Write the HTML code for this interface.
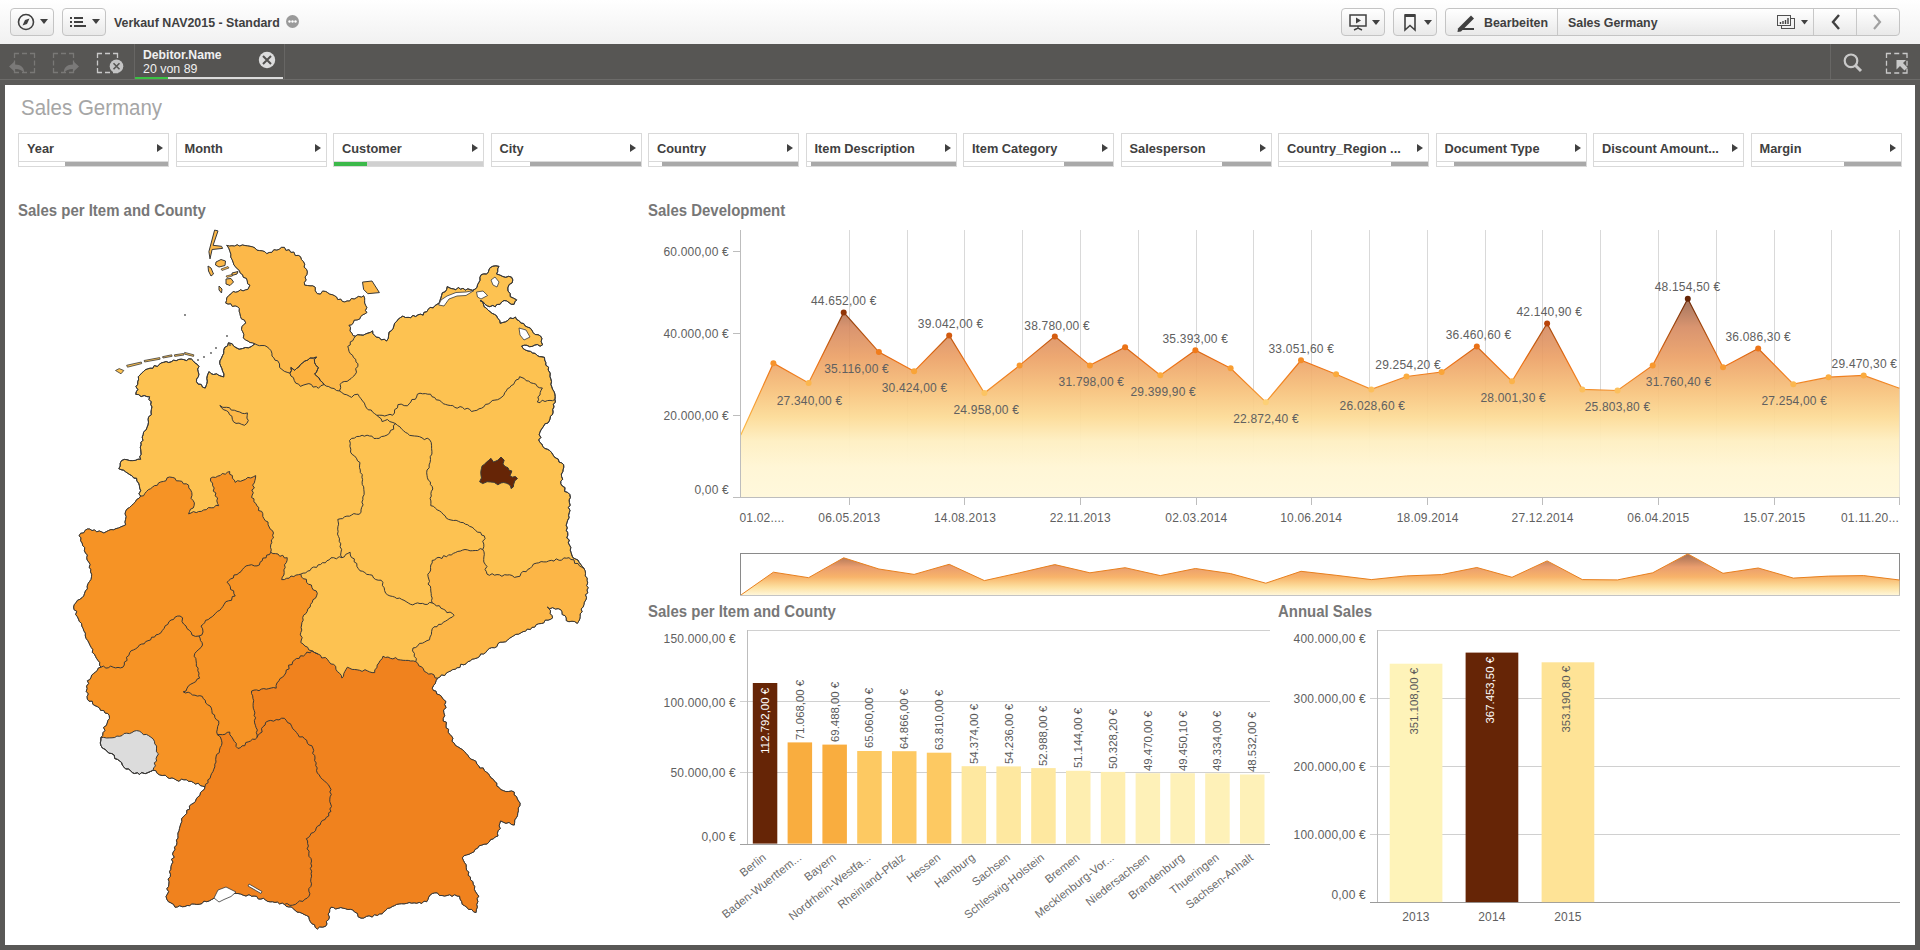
<!DOCTYPE html>
<html><head><meta charset="utf-8">
<style>
*{margin:0;padding:0;box-sizing:border-box}
html,body{width:1920px;height:950px;overflow:hidden;background:#595856;font-family:"Liberation Sans", sans-serif}
.abs{position:absolute}
.tb{position:absolute;left:0;top:0;width:1920px;height:44px;background:linear-gradient(#ffffff,#f1f1f1)}
.btn{position:absolute;top:8px;height:28px;border:1px solid #c4c4c4;border-radius:4px;background:linear-gradient(#ffffff,#e9e9e9)}
.selbar{position:absolute;left:0;top:44px;width:1920px;height:41px;background:#575654}
.content{position:absolute;left:5px;top:85px;width:1910px;height:860px;background:#fff}
.fbox{position:absolute;top:133px;width:151px;height:34px;border:1px solid #d9d9d9;background:#fff}
.fbox .lbl{position:absolute;left:8px;top:6.5px;font-weight:bold;font-size:12.8px;color:#404040;white-space:nowrap}
.fbox .arr{position:absolute;right:5px;top:10px;width:0;height:0;border-top:4.5px solid transparent;border-bottom:4.5px solid transparent;border-left:6px solid #404040}
.fbox .bar{position:absolute;left:0;right:0;top:27px;height:1px;background:#d9d9d9}
.fbox .prog{position:absolute;top:28px;height:4px;right:0;background:#a9a9a9}
.ptitle{position:absolute;font-weight:bold;font-size:16px;color:#777;white-space:nowrap;transform-origin:0 0;transform:scaleX(0.935)}
.t{position:absolute;white-space:nowrap;font-size:12px;letter-spacing:0.2px;color:#606060}
.r{font-size:11.4px;letter-spacing:0}
</style></head><body>

<div class="tb"></div>
<div class="btn" style="left:10px;width:44px"></div>
<div class="btn" style="left:62px;width:44px"></div>
<svg class="abs" style="left:0;top:0" width="300" height="44">
 <circle cx="26" cy="22" r="7.5" fill="none" stroke="#404040" stroke-width="1.6"/>
 <path d="M29.5,18.5 L27,24 L22.5,25.5 L25,20 Z" fill="#404040"/>
 <path d="M40,19 L48,19 L44,24 Z" fill="#404040"/>
 <rect x="70" y="17" width="2" height="2" fill="#404040"/><rect x="74" y="17" width="9" height="2" fill="#404040"/>
 <rect x="70" y="21" width="2" height="2" fill="#404040"/><rect x="74" y="21" width="9" height="2" fill="#404040"/>
 <rect x="70" y="25" width="2" height="2" fill="#404040"/><rect x="74" y="25" width="12" height="2" fill="#404040"/>
 <path d="M92,19 L100,19 L96,24 Z" fill="#404040"/>
 <circle cx="292.5" cy="21.5" r="6.5" fill="#9a9a9a"/>
 <circle cx="289.5" cy="21.5" r="1.2" fill="#fff"/><circle cx="292.5" cy="21.5" r="1.2" fill="#fff"/><circle cx="295.5" cy="21.5" r="1.2" fill="#fff"/>
</svg>
<div class="abs" style="left:114px;top:15.5px;font-size:12.4px;font-weight:bold;color:#404040;white-space:nowrap">Verkauf NAV2015 - Standard</div>

<div class="btn" style="left:1341px;width:44px"></div>
<div class="btn" style="left:1393px;width:44px"></div>
<div class="btn" style="left:1445px;width:455px"></div>
<div class="abs" style="left:1557px;top:9px;width:1px;height:26px;background:#c8c8c8"></div>
<div class="abs" style="left:1813px;top:9px;width:1px;height:26px;background:#c8c8c8"></div>
<div class="abs" style="left:1856px;top:9px;width:1px;height:26px;background:#c8c8c8"></div>
<svg class="abs" style="left:1330px;top:0" width="590" height="44">
 <rect x="20" y="15" width="16" height="11" fill="none" stroke="#404040" stroke-width="1.5"/>
 <path d="M26,17.5 L31,20.5 L26,23.5 Z" fill="#404040"/>
 <path d="M28,26 L28,28 M24,30 L28,28 L32,30" stroke="#404040" stroke-width="1.4" fill="none"/>
 <path d="M42,20 L50,20 L46,25 Z" fill="#404040"/>
 <path d="M75,15 L75,30 L80,25.5 L85,30 L85,15 Z" fill="none" stroke="#404040" stroke-width="1.6"/>
 <rect x="75" y="14" width="10" height="3" fill="#404040"/>
 <path d="M94,20 L102,20 L98,25 Z" fill="#404040"/>
 <path d="M128,28.5 L141,15.5 L144,18.5 L131,31.5 L127.5,32 Z" fill="#404040"/>
 <rect x="131" y="28" width="13" height="2" fill="#404040"/>
 <rect x="451.5" y="18.5" width="13" height="10" fill="none" stroke="#505050" stroke-width="1"/>
 <rect x="447.5" y="15.5" width="13" height="10" fill="#f4f4f4" stroke="#505050" stroke-width="1"/>
 <path d="M450.5,24 L450.5,22 M453,24 L453,21 M455.5,24 L455.5,20 M458,24 L458,18" stroke="#404040" stroke-width="1.4"/>
 <path d="M471,20 L478,20 L474.5,24.5 Z" fill="#404040"/>
 <path d="M509,15 L503,22 L509,29" fill="none" stroke="#404040" stroke-width="2.4"/>
 <path d="M544,15 L550,22 L544,29" fill="none" stroke="#a0a0a0" stroke-width="2.2"/>
</svg>
<div class="abs" style="left:1484px;top:15.5px;font-size:12.4px;font-weight:bold;color:#404040">Bearbeiten</div>
<div class="abs" style="left:1568px;top:15.5px;font-size:12.4px;font-weight:bold;color:#404040">Sales Germany</div>

<div class="selbar"></div>
<div class="abs" style="left:0;top:79px;width:1920px;height:6px;background:#5b5a58"></div><div class="abs" style="left:0;top:79px;width:1920px;height:1px;background:#6c6b69"></div>
<div class="abs" style="left:134px;top:44px;width:151px;height:35px;background:#555452;border-left:1px solid #676664;border-right:1px solid #676664"></div>
<div class="abs" style="left:135px;top:77px;width:148px;height:2px;background:#dcdcdc"></div>
<div class="abs" style="left:135px;top:77px;width:33px;height:2px;background:#3bc144"></div>
<div class="abs" style="left:143px;top:48px;font-size:12.2px;font-weight:bold;color:#f0f0f0">Debitor.Name</div>
<div class="abs" style="left:143px;top:62px;font-size:12.4px;color:#f0f0f0">20 von 89</div>
<div class="abs" style="left:1830px;top:44px;width:1px;height:35px;background:#686765"></div>
<svg class="abs" style="left:0;top:44px" width="1920" height="41">
 <circle cx="267" cy="16" r="8.2" fill="#dcdcdc"/>
 <path d="M263,12 L271,20 M271,12 L263,20" stroke="#52514f" stroke-width="2"/>
 <path d="M14.5,14.0 V9.5 H19.0 M22.0,9.5 H27.0 M30.0,9.5 H34.5 V14.0 M14.5,16.5 V21.5 M34.5,16.5 V21.5 M14.5,24.0 V28.5 H19.0 M22.0,28.5 H27.0 M30.0,28.5 H34.5 V24.0" fill="none" stroke="#797876" stroke-width="1.3"/>
 <path d="M53.5,14.0 V9.5 H58.0 M61.0,9.5 H66.0 M69.0,9.5 H73.5 V14.0 M53.5,16.5 V21.5 M73.5,16.5 V21.5 M53.5,24.0 V28.5 H58.0 M61.0,28.5 H66.0 M69.0,28.5 H73.5 V24.0" fill="none" stroke="#797876" stroke-width="1.3"/>
 <path d="M97.5,14.0 V9.5 H102.0 M105.0,9.5 H110.0 M113.0,9.5 H117.5 V14.0 M97.5,16.5 V21.5 M117.5,16.5 V21.5 M97.5,24.0 V28.5 H102.0 M105.0,28.5 H110.0 M113.0,28.5 H117.5 V24.0" fill="none" stroke="#c9c9c9" stroke-width="1.3"/>
 <path d="M9,22.5 L15,17 L15,20.5 C21,20.5 24.5,23.5 24,29 C22,26 19.5,25 15,25 L15,28 Z" fill="#7a7978"/>
 <path d="M79,22.5 L73,17 L73,20.5 C67,20.5 63.5,23.5 64,29 C66,26 68.5,25 73,25 L73,28 Z" fill="#7a7978"/>
 <circle cx="116.5" cy="22.3" r="6.8" fill="#c4c4c4"/>
 <path d="M113.5,19.3 L119.5,25.3 M119.5,19.3 L113.5,25.3" stroke="#575654" stroke-width="1.6"/>
 <circle cx="1851" cy="16.8" r="6.3" fill="none" stroke="#c9c9c9" stroke-width="2.2"/>
 <path d="M1855.5,21.5 L1861,27" stroke="#c9c9c9" stroke-width="3"/>
 <path d="M1886.5,14.0 V9.5 H1891.0 M1894.25,9.5 H1899.25 M1902.5,9.5 H1907.0 V14.0 M1886.5,16.75 V21.75 M1907.0,16.75 V21.75 M1886.5,24.5 V29.0 H1891.0 M1894.25,29.0 H1899.25 M1902.5,29.0 H1907.0 V24.5" fill="none" stroke="#c9c9c9" stroke-width="1.3"/>
 <path d="M1896.5,16 L1906,16 L1903,19 L1907.5,23.5 L1904.5,26.5 L1900,22 L1896.5,25.5 Z" fill="#c9c9c9"/>
</svg>

<div class="content"></div>
<div class="abs" style="left:20.5px;top:94.5px;font-size:22.5px;color:#a6a6a6;white-space:nowrap;transform-origin:0 0;transform:scaleX(0.91)">Sales Germany</div>
<div class="fbox" style="left:18.0px"><div class="lbl">Year</div><div class="arr"></div><div class="bar"></div><div class="prog" style="left:46px"></div></div>
<div class="fbox" style="left:175.5px"><div class="lbl">Month</div><div class="arr"></div><div class="bar"></div></div>
<div class="fbox" style="left:333.0px"><div class="lbl">Customer</div><div class="arr"></div><div class="bar"></div><div class="prog" style="left:0;background:#d0d0d0"></div><div class="prog" style="left:0;width:33px;right:auto;background:#3cb94a"></div></div>
<div class="fbox" style="left:490.5px"><div class="lbl">City</div><div class="arr"></div><div class="bar"></div><div class="prog" style="left:38.5px"></div></div>
<div class="fbox" style="left:648.0px"><div class="lbl">Country</div><div class="arr"></div><div class="bar"></div><div class="prog" style="left:13px"></div></div>
<div class="fbox" style="left:805.5px"><div class="lbl">Item Description</div><div class="arr"></div><div class="bar"></div><div class="prog" style="left:4.5px"></div></div>
<div class="fbox" style="left:963.0px"><div class="lbl">Item Category</div><div class="arr"></div><div class="bar"></div><div class="prog" style="left:100px"></div></div>
<div class="fbox" style="left:1120.5px"><div class="lbl">Salesperson</div><div class="arr"></div><div class="bar"></div><div class="prog" style="left:100.5px"></div></div>
<div class="fbox" style="left:1278.0px"><div class="lbl">Country_Region ...</div><div class="arr"></div><div class="bar"></div><div class="prog" style="left:111.5px"></div></div>
<div class="fbox" style="left:1435.5px"><div class="lbl">Document Type</div><div class="arr"></div><div class="bar"></div><div class="prog" style="left:17px"></div></div>
<div class="fbox" style="left:1593.0px"><div class="lbl">Discount Amount...</div><div class="arr"></div><div class="bar"></div></div>
<div class="fbox" style="left:1750.5px"><div class="lbl">Margin</div><div class="arr"></div><div class="bar"></div><div class="prog" style="left:92.5px"></div></div>
<div class="ptitle" style="left:18px;top:201.5px">Sales per Item and County</div>
<div class="ptitle" style="left:648px;top:201.5px">Sales Development</div>
<div class="ptitle" style="left:648px;top:603px">Sales per Item and County</div>
<div class="ptitle" style="left:1278px;top:603px">Annual Sales</div>
<svg style="position:absolute;left:0;top:0" width="1920" height="950" viewBox="0 0 1920 950">
<path d="M226.8,245.3 L229.3,246.1 L231.9,245.8 L234.5,246.1 L237.2,244.8 L239.7,246.1 L242.3,245.0 L244.9,245.5 L247.4,245.9 L250.0,246.3 L252.6,246.9 L255.0,248.0 L256.9,250.2 L259.6,250.6 L262.3,250.9 L264.8,251.7 L266.8,253.7 L269.2,252.5 L272.0,252.3 L273.8,249.8 L276.9,250.2 L279.4,249.2 L281.5,247.4 L284.4,247.4 L285.9,250.4 L289.2,249.8 L290.8,252.4 L293.9,252.2 L295.2,255.6 L298.3,255.4 L300.5,256.8 L301.4,259.5 L303.4,261.7 L304.7,264.2 L304.0,267.1 L306.5,269.3 L307.3,271.9 L306.8,274.7 L305.0,277.1 L306.1,280.0 L304.3,282.4 L304.7,285.2 L307.4,285.5 L310.0,285.9 L312.8,285.9 L315.2,287.3 L315.2,290.8 L317.3,293.7 L320.4,294.2 L322.6,291.1 L325.7,291.5 L327.8,292.8 L329.7,294.2 L332.2,294.7 L334.4,295.7 L336.5,297.0 L337.7,299.6 L340.8,299.2 L342.3,301.4 L344.7,302.0 L347.0,301.0 L349.6,301.1 L351.4,298.5 L354.2,299.1 L356.4,297.8 L358.6,296.4 L361.4,297.2 L363.6,295.8 L364.6,298.1 L364.6,300.6 L364.6,303.1 L365.6,305.4 L366.8,307.6 L365.4,310.4 L366.8,312.6 L364.7,313.9 L362.4,314.9 L360.7,316.7 L359.5,319.1 L357.1,319.9 L354.2,320.1 L353.2,322.9 L351.6,324.8 L348.9,325.2 L350.5,327.6 L349.9,330.9 L351.8,333.2 L353.1,335.7 L355.4,336.2 L357.6,334.7 L360.4,334.9 L363.2,335.2 L365.5,334.0 L367.9,333.1 L370.4,332.4 L372.6,330.9 L372.9,333.6 L374.6,335.4 L376.4,337.2 L379.2,337.5 L381.2,339.8 L384.3,339.3 L386.5,341.0 L388.3,338.3 L388.6,335.2 L389.1,332.1 L391.5,330.6 L393.1,328.5 L393.9,325.8 L394.7,323.1 L396.7,321.4 L398.2,319.2 L400.4,317.6 L402.8,316.1 L405.5,317.5 L408.1,317.4 L410.7,317.6 L413.0,315.4 L415.7,316.5 L418.0,314.8 L420.5,314.2 L423.2,315.1 L423.9,312.4 L426.9,311.6 L428.2,309.4 L430.0,307.4 L433.2,307.8 L434.9,305.7 L437.1,304.3 L439.3,302.8 L440.0,300.3 L440.9,298.0 L441.6,295.4 L442.3,292.8 L445.4,291.6 L446.7,289.3 L447.2,286.6 L451.0,288.5 L453.4,288.8 L455.8,289.8 L458.2,287.4 L460.6,289.2 L463.0,288.3 L465.4,290.1 L467.8,288.8 L470.2,289.6 L472.6,290.3 L475.0,289.2 L477.0,287.4 L477.5,284.8 L478.8,282.5 L480.0,280.3 L479.9,277.3 L481.3,274.6 L483.8,273.9 L486.3,274.0 L488.3,272.4 L488.9,269.9 L490.1,267.7 L492.9,266.2 L495.9,265.8 L499.0,266.4 L497.7,268.8 L497.7,271.6 L496.5,274.0 L499.8,275.0 L502.8,276.5 L505.7,277.3 L508.7,276.3 L511.6,277.2 L512.8,279.9 L512.2,282.8 L509.1,284.6 L507.8,287.9 L508.0,291.0 L510.2,293.6 L510.3,296.7 L513.6,298.2 L516.7,299.9 L514.9,301.8 L514.1,304.3 L511.2,304.3 L509.0,302.6 L506.7,300.9 L504.0,300.5 L501.7,302.0 L500.1,304.3 L496.8,304.5 L495.2,306.9 L492.9,305.4 L489.8,306.7 L487.3,305.9 L485.0,304.3 L483.0,301.7 L480.0,300.5 L482.5,301.6 L483.4,304.1 L484.1,306.7 L486.3,308.1 L488.0,310.1 L490.0,311.6 L492.0,313.3 L494.3,314.3 L496.5,315.7 L497.7,318.3 L499.8,320.4 L500.2,323.3 L502.8,322.5 L505.5,321.8 L507.9,320.4 L509.9,317.9 L513.1,318.6 L515.4,317.0 L516.7,319.5 L519.2,320.8 L520.8,323.0 L523.7,323.5 L525.1,325.9 L527.5,327.1 L530.2,328.0 L531.8,330.1 L533.2,332.6 L535.0,334.5 L538.1,334.7 L540.5,336.0 L541.9,338.4 L541.2,341.7 L542.6,344.8 L540.1,346.2 L537.3,344.5 L534.8,345.1 L532.2,346.4 L529.6,346.7 L526.9,345.3 L524.3,345.2 L521.7,346.0 L523.1,348.5 L525.4,350.0 L528.0,351.0 L530.5,351.4 L532.6,353.0 L535.2,353.4 L537.1,355.4 L539.4,356.6 L542.0,356.8 L544.5,357.4 L544.7,360.1 L545.8,362.5 L545.8,365.2 L548.6,367.2 L548.2,370.0 L550.2,373.1 L550.0,376.7 L550.9,379.1 L551.5,381.7 L550.9,384.4 L551.8,386.9 L552.6,389.3 L554.1,391.7 L554.9,394.1 L555.2,396.7 L555.0,399.4 L555.4,402.1 L553.4,404.3 L554.0,407.0 L552.7,409.4 L553.1,412.1 L552.5,414.6 L550.5,416.1 L550.1,418.8 L549.2,421.1 L547.8,423.1 L544.8,423.9 L543.7,426.1 L542.3,428.1 L540.9,430.1 L539.9,432.3 L539.2,434.8 L540.9,437.4 L538.7,439.9 L539.9,442.4 L541.8,444.0 L542.9,446.5 L544.6,448.4 L547.3,449.2 L549.5,450.4 L551.3,452.2 L552.7,454.3 L554.0,456.6 L556.0,458.1 L558.3,459.2 L559.1,462.1 L561.7,462.9 L563.6,464.6 L563.8,467.1 L563.2,469.4 L562.8,471.8 L561.4,474.1 L561.6,476.6 L562.7,479.2 L560.8,481.3 L560.8,483.8 L562.4,486.1 L565.0,487.6 L564.6,491.4 L567.8,492.5 L569.8,494.5 L570.4,497.5 L569.2,499.9 L569.4,502.5 L570.2,505.2 L568.4,507.5 L570.0,510.3 L569.3,512.7 L568.6,515.2 L569.1,517.8 L567.7,520.2 L567.0,522.7 L566.2,525.2 L567.3,527.9 L566.3,530.3 L567.7,532.6 L567.8,535.2 L566.8,538.0 L569.4,540.0 L568.3,542.8 L569.5,545.1 L570.8,547.4 L570.3,550.2 L571.1,552.6 L571.8,555.0 L572.8,557.6 L575.3,558.9 L577.9,560.0 L579.2,562.4 L580.8,564.5 L582.4,566.6 L584.1,568.6 L585.1,570.9 L585.5,573.3 L585.2,575.9 L587.1,578.0 L587.0,580.5 L587.7,582.9 L586.6,585.6 L588.2,587.8 L586.9,590.0 L587.8,592.9 L585.4,594.7 L586.5,597.7 L585.8,600.0 L584.3,602.2 L583.9,604.7 L583.1,607.0 L581.1,609.0 L582.1,611.9 L580.1,613.9 L580.1,616.5 L579.8,619.0 L578.7,621.2 L577.3,623.4 L574.8,621.6 L572.0,621.2 L568.9,621.7 L566.3,620.6 L566.3,617.9 L565.1,615.7 L562.2,614.5 L562.1,611.8 L560.8,609.7 L558.2,608.6 L555.3,609.0 L552.7,607.6 L549.7,608.7 L547.2,607.0 L549.1,608.8 L550.5,610.8 L550.1,613.7 L551.9,615.5 L552.6,617.9 L550.5,619.3 L548.1,620.1 L545.3,620.0 L543.8,622.8 L541.4,623.5 L538.7,623.7 L536.3,624.6 L534.7,627.1 L532.0,627.3 L530.3,629.5 L527.3,629.0 L525.5,631.2 L523.0,631.6 L520.8,632.9 L518.6,634.1 L515.9,634.3 L513.7,635.7 L511.6,637.0 L509.4,638.3 L507.6,640.1 L505.6,641.7 L502.9,642.1 L500.1,642.2 L498.0,643.5 L496.8,646.6 L494.5,647.7 L491.6,647.6 L489.2,648.5 L487.3,650.3 L485.7,652.5 L483.6,653.9 L480.7,653.9 L479.4,656.6 L477.2,657.9 L474.7,658.7 L472.1,659.2 L470.2,660.9 L467.8,661.7 L466.1,663.7 L463.9,664.8 L460.8,664.2 L459.8,667.5 L457.1,667.7 L455.2,669.2 L452.6,669.6 L450.5,671.0 L448.3,671.9 L446.2,673.2 L444.7,675.5 L441.5,674.8 L439.9,677.0 L437.7,678.1 L436.1,680.5 L435.3,683.3 L433.5,685.6 L432.2,688.2 L433.4,690.5 L436.0,691.2 L436.7,694.0 L439.3,694.8 L441.3,696.2 L442.5,698.5 L444.4,700.0 L445.9,701.9 L444.6,704.5 L446.1,707.6 L443.5,709.9 L443.8,712.8 L444.7,715.7 L443.2,718.3 L443.1,721.0 L446.4,722.3 L446.0,725.1 L446.0,727.8 L448.6,729.3 L448.1,732.2 L449.6,734.2 L451.5,736.1 L452.9,738.2 L451.9,741.3 L454.1,743.0 L455.4,745.5 L457.8,746.8 L460.0,748.2 L462.3,749.6 L464.3,751.3 L466.0,753.4 L467.8,755.3 L469.2,757.5 L471.0,759.2 L473.6,760.1 L475.9,761.3 L476.8,764.0 L478.6,765.7 L479.8,768.1 L483.3,768.0 L484.3,770.6 L486.3,772.1 L488.3,773.6 L489.7,775.8 L491.0,777.9 L493.3,779.3 L494.6,781.5 L496.7,783.0 L496.8,786.1 L499.1,787.5 L500.6,789.5 L503.2,790.6 L505.9,791.6 L508.7,791.5 L511.7,791.0 L514.3,792.2 L514.1,794.9 L516.5,796.6 L517.3,798.9 L518.5,801.1 L520.1,803.1 L519.8,805.9 L518.2,808.0 L518.4,810.7 L517.7,813.1 L517.5,815.6 L516.3,817.8 L514.7,819.9 L514.6,822.5 L514.3,825.0 L511.5,824.5 L509.1,822.4 L505.9,823.3 L503.2,822.1 L500.6,820.9 L499.8,823.3 L499.1,825.8 L500.2,828.6 L498.0,830.8 L497.4,833.3 L497.9,836.0 L495.3,836.9 L493.4,838.8 L490.7,839.5 L489.1,842.0 L487.1,843.9 L484.2,844.2 L481.7,845.1 L479.1,845.8 L477.5,848.2 L475.2,849.3 L473.8,851.9 L471.4,853.0 L469.1,854.2 L466.5,854.9 L464.0,855.7 L462.3,857.9 L463.3,860.3 L464.5,862.6 L466.1,864.8 L466.2,867.5 L466.5,870.2 L468.8,872.1 L468.0,875.2 L470.4,877.0 L470.5,879.8 L472.8,881.6 L473.2,884.3 L474.7,886.5 L474.4,889.6 L475.6,891.9 L477.1,894.1 L478.7,896.2 L477.0,898.7 L477.9,901.7 L476.7,904.3 L477.3,907.2 L476.3,909.8 L476.0,912.6 L473.5,911.7 L471.7,909.4 L468.6,909.4 L466.8,907.2 L464.6,905.7 L462.3,904.4 L461.7,901.6 L460.1,899.1 L459.6,896.2 L457.1,896.0 L454.7,894.7 L452.0,896.3 L449.7,894.7 L447.1,895.5 L444.5,896.0 L442.1,895.5 L439.5,895.5 L437.3,892.8 L434.8,892.8 L432.2,893.5 L430.1,895.0 L428.7,897.1 L427.9,899.5 L426.7,901.7 L424.1,901.1 L421.8,903.4 L419.2,902.4 L416.7,903.2 L414.2,902.8 L411.7,903.1 L409.1,902.5 L406.6,903.4 L404.1,903.8 L401.6,903.7 L399.1,903.9 L396.6,904.4 L394.5,905.6 L392.2,906.5 L390.1,907.9 L387.5,908.3 L385.9,910.3 L383.8,911.7 L382.2,913.8 L379.5,913.9 L377.5,915.4 L374.6,914.7 L372.1,917.0 L369.1,915.7 L366.4,916.4 L363.8,918.0 L361.0,918.1 L358.2,916.8 L357.5,913.4 L354.7,912.1 L352.8,909.9 L350.4,909.3 L347.9,909.5 L345.6,908.7 L343.2,908.2 L340.8,907.5 L338.2,908.3 L335.7,908.9 L333.4,907.5 L331.0,907.2 L329.7,909.4 L329.6,912.0 L328.1,914.1 L329.3,917.0 L328.7,919.5 L326.3,921.4 L326.9,924.1 L325.5,926.3 L322.7,927.1 L319.6,926.9 L317.3,929.0 L315.3,927.4 L314.6,924.8 L311.9,923.7 L310.4,921.7 L309.3,919.4 L308.8,916.6 L306.3,915.4 L304.1,914.4 L301.9,913.2 L299.6,912.3 L297.0,912.0 L295.1,910.3 L293.2,908.7 L291.4,906.9 L288.6,906.9 L286.2,906.3 L284.4,904.4 L282.3,903.0 L279.6,903.9 L277.5,902.0 L274.9,902.4 L272.6,901.7 L270.1,901.8 L267.7,901.4 L265.6,900.0 L263.5,898.3 L260.9,899.0 L258.4,899.0 L256.6,896.3 L254.1,896.0 L251.6,896.2 L249.0,894.6 L246.0,896.0 L243.3,895.2 L240.7,894.0 L238.0,893.5 L235.2,893.5 L232.4,893.6 L229.5,893.4 L226.9,894.7 L224.1,894.9 L221.3,894.7 L218.7,896.2 L215.8,895.9 L213.9,898.3 L211.6,899.5 L209.3,900.8 L206.9,901.7 L203.9,901.1 L202.0,903.5 L199.5,904.2 L196.8,904.4 L194.3,904.0 L191.8,903.9 L189.6,905.6 L187.1,905.5 L184.8,906.5 L182.3,906.7 L179.7,905.7 L177.4,906.9 L175.0,907.2 L173.6,904.4 L171.0,902.9 L168.2,901.5 L166.7,898.9 L166.1,896.3 L167.5,894.0 L168.7,891.6 L166.8,888.9 L168.5,886.5 L168.9,884.1 L169.1,881.6 L168.1,879.0 L170.3,876.7 L170.5,874.2 L169.5,871.6 L170.9,869.4 L171.0,866.8 L171.6,864.4 L173.0,862.1 L171.5,859.2 L174.4,857.3 L172.6,854.3 L173.3,851.9 L175.0,849.7 L174.6,847.1 L176.6,845.1 L177.0,842.7 L176.5,840.1 L178.1,838.0 L178.0,835.5 L178.0,833.0 L179.1,830.8 L179.5,828.4 L180.2,826.0 L180.9,823.7 L181.9,821.5 L181.6,818.9 L183.2,816.8 L185.1,815.1 L186.8,813.3 L186.8,810.3 L189.6,809.2 L189.4,806.0 L191.4,804.4 L193.8,803.1 L195.5,801.3 L196.4,798.8 L197.9,796.9 L200.0,795.4 L200.5,792.6 L202.3,790.9 L204.4,789.3 L205.0,786.7 L202.6,786.1 L200.2,785.5 L198.3,783.2 L195.5,784.0 L193.4,782.5 L191.2,781.3 L188.6,781.3 L186.4,779.7 L183.9,779.8 L181.6,779.1 L178.9,781.2 L176.6,780.2 L174.3,778.8 L172.0,777.8 L169.5,778.5 L167.2,777.2 L165.2,775.2 L162.2,775.5 L159.6,774.8 L157.3,773.4 L155.8,770.6 L153.0,770.3 L150.4,771.5 L147.8,772.6 L145.1,773.7 L141.8,772.5 L139.4,774.4 L137.4,772.7 L134.4,773.5 L132.2,772.5 L130.4,770.4 L128.4,768.9 L125.7,768.9 L123.9,767.1 L122.4,765.1 L121.6,762.5 L119.6,760.9 L117.5,759.4 L114.8,758.5 L114.2,755.0 L111.9,753.6 L108.8,753.1 L107.0,751.1 L105.0,749.3 L102.5,748.1 L101.0,745.7 L100.3,743.0 L100.9,740.2 L101.0,737.5 L102.8,735.4 L103.0,732.7 L105.0,730.6 L103.6,727.4 L106.3,725.6 L107.2,723.2 L107.9,720.6 L109.5,718.4 L109.3,715.6 L107.8,713.5 L105.1,713.0 L103.8,710.5 L100.7,710.4 L99.5,708.0 L97.4,706.6 L95.0,705.6 L92.9,704.3 L92.2,701.1 L89.0,701.2 L87.4,699.2 L87.1,696.6 L88.4,693.9 L86.2,691.3 L87.2,688.7 L86.6,686.1 L88.7,683.4 L87.4,680.8 L89.7,679.7 L91.0,677.6 L91.8,675.0 L93.7,673.5 L95.6,672.0 L97.4,670.4 L98.4,668.0 L101.0,667.2 L99.6,665.2 L99.7,662.4 L98.1,660.5 L96.6,658.5 L95.5,656.3 L94.4,654.1 L92.3,652.4 L92.8,649.4 L91.3,647.5 L90.1,645.3 L89.0,642.9 L87.8,640.6 L86.2,638.5 L85.3,636.0 L85.4,633.1 L83.9,630.9 L83.1,628.4 L81.9,626.1 L81.6,623.4 L79.4,621.5 L78.5,619.1 L77.4,616.7 L75.7,614.6 L76.8,611.3 L74.1,609.7 L73.7,607.0 L74.4,604.3 L76.2,602.6 L77.4,600.4 L80.0,599.3 L82.1,597.7 L83.8,595.9 L84.6,593.3 L85.5,590.9 L87.4,588.9 L87.2,586.1 L88.1,583.7 L89.5,581.5 L91.1,579.4 L91.5,576.8 L91.7,574.3 L90.6,571.9 L90.8,569.4 L89.2,567.2 L90.2,564.5 L88.9,562.2 L87.2,560.1 L86.8,557.6 L87.4,555.0 L85.5,553.0 L84.4,550.6 L84.8,547.6 L82.7,545.6 L82.2,543.0 L80.7,540.8 L81.0,537.9 L79.2,535.8 L80.6,533.3 L83.7,532.9 L85.1,530.4 L87.4,529.0 L89.9,529.1 L92.0,530.6 L94.6,529.9 L96.6,531.9 L99.3,531.0 L101.6,531.9 L103.8,533.0 L106.1,531.8 L108.4,530.6 L110.9,529.6 L113.7,529.8 L116.0,528.6 L118.6,528.0 L120.9,526.9 L123.4,525.9 L125.7,524.8 L125.0,522.1 L125.6,519.4 L126.2,516.6 L125.1,513.9 L125.7,511.2 L127.2,508.9 L129.5,507.5 L131.4,505.7 L133.4,503.9 L135.3,502.0 L136.7,499.6 L139.1,498.2 L140.7,496.1 L138.9,493.8 L140.7,490.7 L139.7,488.3 L139.4,485.7 L138.6,483.2 L136.8,480.9 L136.6,478.3 L133.8,478.1 L132.1,475.9 L129.9,474.7 L127.8,473.3 L125.7,471.9 L123.7,470.3 L121.1,469.7 L118.8,468.7 L120.2,466.1 L120.2,463.1 L121.6,460.5 L124.3,459.4 L127.0,459.7 L129.8,460.6 L132.6,460.6 L135.3,460.4 L138.0,459.2 L140.7,459.2 L139.7,456.8 L141.1,454.4 L140.9,452.0 L140.7,449.6 L140.3,447.2 L141.1,444.8 L140.9,442.4 L142.9,440.3 L142.2,437.1 L143.2,434.6 L143.6,431.9 L146.1,429.9 L147.0,427.4 L148.0,424.9 L148.5,422.2 L148.1,419.4 L148.6,416.8 L151.3,414.8 L151.0,412.0 L151.4,409.4 L151.9,406.9 L150.7,404.4 L151.2,401.8 L148.9,399.5 L149.7,396.9 L146.9,396.6 L144.2,395.5 L141.1,396.6 L138.6,394.6 L135.8,394.4 L136.2,391.9 L137.8,389.5 L135.9,386.7 L137.7,384.3 L137.7,381.8 L138.6,379.3 L138.3,376.7 L140.0,375.0 L141.6,373.2 L143.4,371.6 L145.3,369.8 L147.6,368.9 L150.1,368.2 L152.8,368.3 L154.3,365.5 L157.4,366.5 L159.2,364.4 L161.3,362.9 L163.7,362.3 L166.1,361.5 L168.7,362.5 L171.2,361.8 L173.6,360.2 L176.2,360.7 L178.7,359.5 L181.2,359.2 L183.8,359.6 L186.4,360.6 L188.8,358.8 L191.4,359.0 L193.3,360.9 L195.0,363.0 L197.4,364.4 L199.0,366.6 L197.6,369.0 L198.2,371.6 L198.9,374.3 L198.3,376.8 L196.6,379.1 L196.5,381.7 L198.1,384.1 L201.2,384.4 L202.6,387.2 L205.3,388.0 L206.1,385.7 L206.9,383.4 L207.3,381.1 L206.8,378.5 L207.2,376.1 L208.0,373.8 L209.1,371.6 L211.1,373.6 L213.5,374.5 L216.6,373.8 L218.8,375.3 L221.2,376.2 L223.7,376.9 L223.9,373.9 L222.6,371.2 L221.8,368.4 L220.7,366.0 L219.7,363.5 L219.9,360.8 L221.3,358.4 L222.4,355.8 L223.7,353.3 L223.7,350.4 L224.6,347.5 L227.6,345.8 L228.4,342.8 L232.2,343.8 L233.7,346.1 L236.0,347.6 L239.1,349.2 L242.6,348.5 L245.4,347.5 L248.5,347.8 L251.2,346.6 L254.9,343.8 L252.6,342.8 L250.1,342.5 L248.0,341.0 L245.5,340.0 L243.4,337.8 L243.9,334.5 L242.8,331.9 L241.5,329.4 L242.0,326.7 L243.6,324.7 L245.8,323.1 L244.5,320.1 L241.5,318.9 L240.5,316.4 L240.0,313.7 L239.2,311.2 L239.4,308.4 L237.5,306.7 L235.2,305.8 L232.3,306.4 L230.8,303.7 L228.0,304.0 L225.8,303.1 L226.5,300.5 L226.8,297.9 L228.7,295.6 L231.1,293.8 L233.1,291.5 L235.7,292.3 L238.1,291.6 L240.4,289.8 L243.1,290.9 L245.5,289.9 L247.9,289.4 L250.0,285.2 L247.6,283.7 L247.3,280.9 L246.4,278.3 L243.4,277.3 L242.6,274.7 L240.3,273.1 L239.4,270.5 L237.3,268.8 L235.5,266.8 L233.9,264.8 L233.1,262.1 L232.1,259.6 L230.8,257.1 L230.9,254.2 L230.0,251.6 L228.8,248.2 Z" fill="#fdc251" stroke="#383838" stroke-width="1" stroke-linejoin="round"/>
<path d="M226.8,245.3 L229.3,246.1 L231.9,245.8 L234.5,246.1 L237.2,244.8 L239.7,246.1 L242.3,245.0 L244.9,245.5 L247.4,245.9 L250.0,246.3 L252.6,246.9 L255.0,248.0 L256.9,250.2 L259.6,250.6 L262.3,250.9 L264.8,251.7 L266.8,253.7 L269.2,252.5 L272.0,252.3 L273.8,249.8 L276.9,250.2 L279.4,249.2 L281.5,247.4 L284.4,247.4 L285.9,250.4 L289.2,249.8 L290.8,252.4 L293.9,252.2 L295.2,255.6 L298.3,255.4 L300.5,256.8 L301.4,259.5 L303.4,261.7 L304.7,264.2 L304.0,267.1 L306.5,269.3 L307.3,271.9 L306.8,274.7 L305.0,277.1 L306.1,280.0 L304.3,282.4 L304.7,285.2 L307.4,285.5 L310.0,285.9 L312.8,285.9 L315.2,287.3 L315.2,290.8 L317.3,293.7 L320.4,294.2 L322.6,291.1 L325.7,291.5 L327.8,292.8 L329.7,294.2 L332.2,294.7 L334.4,295.7 L336.5,297.0 L337.7,299.6 L340.8,299.2 L342.3,301.4 L344.7,302.0 L347.0,301.0 L349.6,301.1 L351.4,298.5 L354.2,299.1 L356.4,297.8 L358.6,296.4 L361.4,297.2 L363.6,295.8 L364.6,298.1 L364.6,300.6 L364.6,303.1 L365.6,305.4 L366.8,307.6 L365.4,310.4 L366.8,312.6 L364.7,313.9 L362.4,314.9 L360.7,316.7 L359.5,319.1 L357.1,319.9 L354.2,320.1 L353.2,322.9 L351.6,324.8 L348.9,325.2 L350.5,327.6 L349.9,330.9 L351.8,333.2 L353.1,335.7 L355.4,336.2 L353.9,338.3 L352.9,340.6 L350.3,341.9 L350.2,345.0 L347.8,346.3 L348.5,348.8 L349.0,351.3 L350.2,353.5 L352.5,355.2 L353.5,357.5 L355.7,359.3 L356.0,361.9 L357.9,363.8 L357.9,366.6 L355.6,368.6 L356.5,372.2 L355.1,374.7 L352.9,376.7 L351.1,378.5 L349.1,379.9 L347.1,381.4 L344.2,381.5 L341.9,382.4 L340.2,384.3 L340.7,387.7 L339.5,391.0 L336.5,390.5 L334.0,388.5 L331.0,388.0 L328.8,386.6 L326.2,386.1 L324.1,384.5 L322.4,382.3 L320.2,380.4 L318.9,377.8 L316.7,376.0 L314.6,374.1 L316.4,372.2 L317.4,369.8 L318.4,367.5 L316.0,365.5 L314.6,362.7 L314.4,359.5 L316.5,357.0 L313.3,358.1 L309.9,358.0 L307.8,360.1 L304.9,361.0 L302.7,362.8 L300.4,364.6 L298.9,366.9 L296.6,368.4 L294.7,370.3 L290.9,367.5 L291.4,370.5 L290.0,373.2 L287.1,372.3 L284.3,371.3 L281.9,369.4 L279.6,367.5 L279.5,363.9 L277.7,360.8 L275.0,360.2 L273.8,357.8 L272.0,356.1 L271.9,353.2 L271.0,350.7 L269.1,348.5 L267.0,346.8 L264.8,345.6 L262.0,345.5 L259.4,345.7 L257.1,344.9 L254.9,343.8 L254.9,343.8 L252.6,342.8 L250.1,342.5 L248.0,341.0 L245.5,340.0 L243.4,337.8 L243.9,334.5 L242.8,331.9 L241.5,329.4 L242.0,326.7 L243.6,324.7 L245.8,323.1 L244.5,320.1 L241.5,318.9 L240.5,316.4 L240.0,313.7 L239.2,311.2 L239.4,308.4 L237.5,306.7 L235.2,305.8 L232.3,306.4 L230.8,303.7 L228.0,304.0 L225.8,303.1 L226.5,300.5 L226.8,297.9 L228.7,295.6 L231.1,293.8 L233.1,291.5 L235.7,292.3 L238.1,291.6 L240.4,289.8 L243.1,290.9 L245.5,289.9 L247.9,289.4 L250.0,285.2 L247.6,283.7 L247.3,280.9 L246.4,278.3 L243.4,277.3 L242.6,274.7 L240.3,273.1 L239.4,270.5 L237.3,268.8 L235.5,266.8 L233.9,264.8 L233.1,262.1 L232.1,259.6 L230.8,257.1 L230.9,254.2 L230.0,251.6 L228.8,248.2 Z" fill="#fcb849" stroke="none"/>
<path d="M482.8,549.5 L484.0,551.8 L484.3,554.3 L483.9,556.9 L483.7,559.5 L483.8,562.0 L485.2,564.3 L487.0,566.5 L485.0,569.4 L486.4,571.7 L487.0,574.1 L489.4,575.3 L492.1,573.7 L494.5,575.2 L497.0,574.6 L499.5,574.8 L501.9,576.3 L504.6,574.7 L507.1,575.0 L509.6,574.8 L512.1,575.5 L514.4,577.4 L517.0,576.8 L519.9,576.3 L521.0,573.4 L522.8,571.4 L526.2,571.7 L527.8,569.4 L530.2,568.3 L532.1,566.4 L533.5,564.0 L536.2,563.2 L538.7,562.8 L541.1,561.6 L543.8,561.9 L546.4,561.9 L548.8,560.9 L551.3,560.3 L554.0,561.1 L556.2,558.8 L559.1,560.3 L561.6,560.2 L563.8,557.9 L566.5,558.2 L569.0,557.7 L571.0,559.5 L574.0,559.8 L574.7,563.4 L578.0,563.5 L579.5,565.9 L581.8,567.2 L584.1,568.6 L585.1,570.9 L585.5,573.3 L585.2,575.9 L587.1,578.0 L587.0,580.5 L587.7,582.9 L586.6,585.6 L588.2,587.8 L586.9,590.0 L587.8,592.9 L585.4,594.7 L586.5,597.7 L585.8,600.0 L584.3,602.2 L583.9,604.7 L583.1,607.0 L581.1,609.0 L582.1,611.9 L580.1,613.9 L580.1,616.5 L579.8,619.0 L578.7,621.2 L577.3,623.4 L574.8,621.6 L572.0,621.2 L568.9,621.7 L566.3,620.6 L566.3,617.9 L565.1,615.7 L562.2,614.5 L562.1,611.8 L560.8,609.7 L558.2,608.6 L555.3,609.0 L552.7,607.6 L549.7,608.7 L547.2,607.0 L549.1,608.8 L550.5,610.8 L550.1,613.7 L551.9,615.5 L552.6,617.9 L550.5,619.3 L548.1,620.1 L545.3,620.0 L543.8,622.8 L541.4,623.5 L538.7,623.7 L536.3,624.6 L534.7,627.1 L532.0,627.3 L530.3,629.5 L527.3,629.0 L525.5,631.2 L523.0,631.6 L520.8,632.9 L518.6,634.1 L515.9,634.3 L513.7,635.7 L511.6,637.0 L509.4,638.3 L507.6,640.1 L505.6,641.7 L502.9,642.1 L500.1,642.2 L498.0,643.5 L496.8,646.6 L494.5,647.7 L491.6,647.6 L489.2,648.5 L487.3,650.3 L485.7,652.5 L483.6,653.9 L480.7,653.9 L479.4,656.6 L477.2,657.9 L474.7,658.7 L472.1,659.2 L470.2,660.9 L467.8,661.7 L466.1,663.7 L463.9,664.8 L460.8,664.2 L459.8,667.5 L457.1,667.7 L455.2,669.2 L452.6,669.6 L450.5,671.0 L448.3,671.9 L446.2,673.2 L444.7,675.5 L441.5,674.8 L439.9,677.0 L437.7,678.1 L435.1,677.9 L433.9,674.8 L431.6,673.7 L428.7,674.1 L426.7,672.6 L424.3,671.3 L423.3,668.8 L421.6,666.8 L418.9,665.9 L417.8,663.3 L415.8,661.7 L416.4,658.7 L414.2,656.3 L414.4,653.4 L412.5,650.9 L413.0,648.0 L415.7,647.5 L417.8,645.8 L419.5,643.4 L422.4,643.2 L424.7,642.0 L427.0,640.6 L429.5,639.8 L430.0,637.0 L431.4,634.4 L431.6,631.6 L432.2,628.8 L434.0,626.8 L437.0,626.7 L438.6,624.4 L441.5,624.3 L443.3,622.2 L445.7,621.1 L447.8,619.7 L449.9,618.1 L452.3,617.1 L454.1,615.2 L452.2,613.4 L450.1,612.1 L446.9,612.7 L445.4,610.3 L443.2,609.1 L440.8,608.1 L439.3,605.7 L436.3,606.0 L434.5,604.0 L432.2,603.0 L431.5,600.7 L432.2,598.1 L431.3,595.8 L431.2,593.4 L430.8,591.0 L430.7,588.6 L430.4,586.2 L428.0,584.1 L429.5,581.5 L428.8,579.1 L428.1,576.8 L427.8,574.2 L429.7,572.2 L430.7,570.0 L430.5,567.4 L430.8,565.0 L432.2,562.9 L432.2,560.4 L434.7,560.0 L436.6,557.9 L439.0,557.3 L442.0,558.5 L443.6,555.6 L446.6,556.8 L448.6,554.8 L451.2,555.0 L453.3,553.4 L455.6,552.5 L457.8,551.4 L460.3,551.1 L462.6,550.1 L465.0,549.5 L467.5,549.9 L470.1,550.8 L472.6,550.7 L475.2,550.5 L477.7,550.5 L480.3,548.6 L482.8,549.5 Z" fill="#fcb647" stroke="none"/>
<path d="M140.7,496.1 L143.5,495.8 L144.9,493.4 L146.5,491.5 L148.3,489.7 L150.6,488.7 L152.5,487.1 L154.5,485.6 L157.3,485.3 L158.6,482.9 L160.9,481.9 L163.6,481.4 L166.0,480.7 L167.1,477.8 L169.5,477.0 L172.2,477.4 L174.7,478.0 L176.4,480.8 L179.2,480.9 L181.8,481.3 L183.5,483.9 L186.4,483.8 L188.6,485.2 L188.8,487.9 L190.7,490.1 L191.8,492.6 L192.0,495.3 L191.0,498.3 L193.1,500.5 L194.4,502.9 L194.1,505.7 L193.2,508.0 L190.5,509.2 L189.5,511.5 L188.6,513.9 L191.0,513.0 L193.4,511.6 L196.3,512.6 L198.7,511.5 L201.4,511.4 L203.7,509.9 L206.3,509.7 L208.4,507.6 L211.2,507.8 L213.8,507.7 L215.9,505.3 L218.7,505.7 L217.5,503.4 L216.8,500.8 L217.6,497.9 L215.1,495.9 L215.9,493.0 L213.2,491.1 L214.2,488.0 L212.7,485.8 L212.5,483.1 L210.6,481.0 L210.5,478.3 L212.8,477.1 L215.6,477.4 L217.8,476.1 L220.3,475.5 L222.3,473.5 L225.3,474.2 L227.3,472.3 L229.7,471.5 L229.7,474.2 L232.4,475.6 L232.4,478.3 L234.4,480.1 L235.2,482.4 L237.5,480.7 L240.5,481.3 L243.0,480.3 L245.6,479.3 L247.8,477.4 L250.8,478.0 L253.3,476.8 L255.7,475.6 L255.5,478.1 L254.9,480.5 L254.3,482.9 L252.6,485.1 L254.4,488.0 L251.8,490.0 L253.3,492.8 L252.2,495.1 L251.6,497.5 L254.0,498.9 L253.9,501.8 L255.9,503.5 L256.9,505.8 L258.8,507.5 L258.5,510.5 L261.7,511.4 L262.8,513.7 L262.8,516.5 L264.0,518.7 L265.3,520.7 L268.0,522.0 L268.1,524.8 L269.2,527.0 L270.3,529.2 L272.5,530.7 L273.5,533.0 L272.6,535.3 L273.5,537.9 L271.3,540.0 L271.8,542.5 L270.7,544.8 L270.5,547.3 L271.3,549.8 L270.7,552.2 L272.9,553.6 L275.5,553.6 L278.0,554.0 L279.8,556.3 L282.8,555.3 L284.5,558.0 L287.2,557.7 L287.1,560.3 L286.3,562.6 L284.5,564.8 L285.2,567.5 L283.9,569.8 L284.2,572.5 L283.9,575.0 L282.3,577.2 L281.7,579.6 L284.3,579.6 L286.5,578.3 L289.1,578.2 L291.0,576.0 L293.8,576.6 L295.9,575.1 L298.4,574.7 L300.8,574.1 L303.1,573.1 L305.7,573.0 L307.5,571.1 L310.0,570.6 L311.5,568.1 L313.7,567.0 L316.6,567.4 L318.1,564.9 L320.6,564.5 L322.5,562.7 L325.3,562.8 L327.0,560.7 L329.3,559.8 L331.0,557.8 L333.7,557.7 L331.0,557.8 L329.3,559.8 L327.0,560.7 L325.3,562.8 L322.5,562.7 L320.6,564.5 L318.1,564.9 L316.6,567.4 L313.7,567.0 L311.5,568.1 L310.0,570.6 L307.5,571.1 L305.7,573.0 L303.1,573.1 L300.8,574.1 L301.5,576.9 L303.2,578.7 L306.4,579.3 L306.6,582.5 L308.5,584.2 L311.4,585.0 L312.0,587.8 L313.4,590.0 L316.2,590.9 L317.3,593.3 L316.6,595.9 L315.5,598.2 L313.0,599.7 L312.3,602.3 L310.6,604.3 L310.1,607.1 L307.9,608.8 L307.2,611.4 L305.9,613.6 L303.6,615.2 L302.7,617.6 L303.2,620.2 L301.9,622.6 L301.6,625.0 L301.1,627.5 L301.8,630.1 L300.8,632.5 L300.3,634.9 L302.2,637.6 L301.3,640.0 L300.8,642.5 L303.1,644.0 L305.0,646.1 L307.6,647.2 L308.9,650.0 L311.8,650.7 L314.7,652.6 L318.0,654.0 L318.9,656.3 L318.9,658.9 L319.2,661.4 L319.3,664.0 L321.6,666.0 L320.5,668.9 L321.3,671.2 L324.2,673.1 L323.8,675.8 L325.2,678.0 L325.2,680.6 L325.6,683.0 L326.9,685.3 L326.9,687.9 L327.5,690.3 L327.0,693.0 L328.7,695.2 L330.4,697.3 L330.0,700.0 L328.2,701.6 L326.1,702.9 L323.8,703.9 L322.0,705.5 L321.2,708.4 L318.3,708.8 L316.9,710.8 L316.0,713.5 L313.1,713.9 L311.2,715.3 L309.9,717.5 L307.2,718.1 L305.7,720.1 L304.8,722.7 L301.8,723.0 L300.5,725.2 L299.1,727.3 L296.9,728.5 L294.2,729.1 L293.4,731.8 L291.5,733.4 L289.9,735.2 L287.2,735.8 L285.7,737.8 L284.7,740.3 L282.2,741.1 L279.9,742.2 L278.1,743.8 L276.5,745.7 L275.2,748.0 L272.7,748.7 L271.0,750.5 L270.1,753.1 L266.7,752.9 L265.0,754.6 L263.7,756.8 L261.2,757.7 L260.0,760.0 L258.0,761.5 L255.5,761.9 L253.5,763.3 L251.4,764.7 L249.3,766.0 L247.3,767.4 L244.6,767.5 L242.2,768.1 L240.4,770.0 L238.1,771.0 L236.0,772.2 L233.3,772.2 L231.2,773.4 L229.0,774.5 L227.2,776.5 L224.9,777.3 L222.0,777.0 L220.6,779.7 L218.5,781.0 L216.5,782.3 L214.1,783.1 L211.3,782.9 L209.7,785.3 L206.6,784.5 L205.0,786.7 L202.6,786.1 L200.2,785.5 L198.3,783.2 L195.5,784.0 L193.4,782.5 L191.2,781.3 L188.6,781.3 L186.4,779.7 L183.9,779.8 L181.6,779.1 L178.9,781.2 L176.6,780.2 L174.3,778.8 L172.0,777.8 L169.5,778.5 L167.2,777.2 L165.2,775.2 L162.2,775.5 L159.6,774.8 L157.3,773.4 L155.8,770.6 L153.0,770.3 L150.4,771.5 L147.8,772.6 L145.1,773.7 L141.8,772.5 L139.4,774.4 L137.4,772.7 L134.4,773.5 L132.2,772.5 L130.4,770.4 L128.4,768.9 L125.7,768.9 L123.9,767.1 L122.4,765.1 L121.6,762.5 L119.6,760.9 L117.5,759.4 L114.8,758.5 L114.2,755.0 L111.9,753.6 L108.8,753.1 L107.0,751.1 L105.0,749.3 L102.5,748.1 L101.0,745.7 L100.3,743.0 L100.9,740.2 L101.0,737.5 L102.8,735.4 L103.0,732.7 L105.0,730.6 L103.6,727.4 L106.3,725.6 L107.2,723.2 L107.9,720.6 L109.5,718.4 L109.3,715.6 L107.8,713.5 L105.1,713.0 L103.8,710.5 L100.7,710.4 L99.5,708.0 L97.4,706.6 L95.0,705.6 L92.9,704.3 L92.2,701.1 L89.0,701.2 L87.4,699.2 L87.1,696.6 L88.4,693.9 L86.2,691.3 L87.2,688.7 L86.6,686.1 L88.7,683.4 L87.4,680.8 L89.7,679.7 L91.0,677.6 L91.8,675.0 L93.7,673.5 L95.6,672.0 L97.4,670.4 L98.4,668.0 L101.0,667.2 L99.6,665.2 L99.7,662.4 L98.1,660.5 L96.6,658.5 L95.5,656.3 L94.4,654.1 L92.3,652.4 L92.8,649.4 L91.3,647.5 L90.1,645.3 L89.0,642.9 L87.8,640.6 L86.2,638.5 L85.3,636.0 L85.4,633.1 L83.9,630.9 L83.1,628.4 L81.9,626.1 L81.6,623.4 L79.4,621.5 L78.5,619.1 L77.4,616.7 L75.7,614.6 L76.8,611.3 L74.1,609.7 L73.7,607.0 L74.4,604.3 L76.2,602.6 L77.4,600.4 L80.0,599.3 L82.1,597.7 L83.8,595.9 L84.6,593.3 L85.5,590.9 L87.4,588.9 L87.2,586.1 L88.1,583.7 L89.5,581.5 L91.1,579.4 L91.5,576.8 L91.7,574.3 L90.6,571.9 L90.8,569.4 L89.2,567.2 L90.2,564.5 L88.9,562.2 L87.2,560.1 L86.8,557.6 L87.4,555.0 L85.5,553.0 L84.4,550.6 L84.8,547.6 L82.7,545.6 L82.2,543.0 L80.7,540.8 L81.0,537.9 L79.2,535.8 L80.6,533.3 L83.7,532.9 L85.1,530.4 L87.4,529.0 L89.9,529.1 L92.0,530.6 L94.6,529.9 L96.6,531.9 L99.3,531.0 L101.6,531.9 L103.8,533.0 L106.1,531.8 L108.4,530.6 L110.9,529.6 L113.7,529.8 L116.0,528.6 L118.6,528.0 L120.9,526.9 L123.4,525.9 L125.7,524.8 L125.0,522.1 L125.6,519.4 L126.2,516.6 L125.1,513.9 L125.7,511.2 L127.2,508.9 L129.5,507.5 L131.4,505.7 L133.4,503.9 L135.3,502.0 L136.7,499.6 L139.1,498.2 L140.7,496.1 Z" fill="#f69325" stroke="none"/>
<path d="M318.0,654.0 L320.4,655.2 L321.8,658.0 L325.4,657.5 L327.4,659.3 L329.0,661.7 L330.8,663.9 L333.7,664.4 L335.7,666.3 L335.9,669.3 L337.3,671.5 L339.6,673.3 L341.3,675.4 L341.9,678.1 L343.5,676.2 L343.8,673.6 L344.9,671.4 L346.1,669.3 L347.4,667.2 L349.8,668.3 L352.1,669.4 L354.7,669.5 L357.2,669.8 L359.7,670.3 L362.1,671.4 L365.0,669.7 L367.3,670.8 L369.7,671.9 L372.1,672.6 L374.7,672.6 L374.8,669.7 L376.9,667.8 L377.2,665.1 L378.9,662.9 L380.1,660.6 L382.2,658.7 L383.0,656.2 L385.4,657.5 L388.0,657.0 L390.4,658.3 L392.9,658.9 L395.7,657.6 L398.0,659.7 L400.5,659.9 L403.1,660.3 L405.6,660.4 L408.2,660.4 L410.7,661.0 L413.3,660.9 L415.8,661.7 L417.8,663.3 L418.9,665.9 L421.6,666.8 L423.3,668.8 L424.3,671.3 L426.7,672.6 L428.7,674.1 L431.6,673.7 L433.9,674.8 L435.1,677.9 L437.7,678.1 L436.1,680.5 L435.3,683.3 L433.5,685.6 L432.2,688.2 L433.4,690.5 L436.0,691.2 L436.7,694.0 L439.3,694.8 L441.3,696.2 L442.5,698.5 L444.4,700.0 L445.9,701.9 L444.6,704.5 L446.1,707.6 L443.5,709.9 L443.8,712.8 L444.7,715.7 L443.2,718.3 L443.1,721.0 L446.4,722.3 L446.0,725.1 L446.0,727.8 L448.6,729.3 L448.1,732.2 L449.6,734.2 L451.5,736.1 L452.9,738.2 L451.9,741.3 L454.1,743.0 L455.4,745.5 L457.8,746.8 L460.0,748.2 L462.3,749.6 L464.3,751.3 L466.0,753.4 L467.8,755.3 L469.2,757.5 L471.0,759.2 L473.6,760.1 L475.9,761.3 L476.8,764.0 L478.6,765.7 L479.8,768.1 L483.3,768.0 L484.3,770.6 L486.3,772.1 L488.3,773.6 L489.7,775.8 L491.0,777.9 L493.3,779.3 L494.6,781.5 L496.7,783.0 L496.8,786.1 L499.1,787.5 L500.6,789.5 L503.2,790.6 L505.9,791.6 L508.7,791.5 L511.7,791.0 L514.3,792.2 L514.1,794.9 L516.5,796.6 L517.3,798.9 L518.5,801.1 L520.1,803.1 L519.8,805.9 L518.2,808.0 L518.4,810.7 L517.7,813.1 L517.5,815.6 L516.3,817.8 L514.7,819.9 L514.6,822.5 L514.3,825.0 L511.5,824.5 L509.1,822.4 L505.9,823.3 L503.2,822.1 L500.6,820.9 L499.8,823.3 L499.1,825.8 L500.2,828.6 L498.0,830.8 L497.4,833.3 L497.9,836.0 L495.3,836.9 L493.4,838.8 L490.7,839.5 L489.1,842.0 L487.1,843.9 L484.2,844.2 L481.7,845.1 L479.1,845.8 L477.5,848.2 L475.2,849.3 L473.8,851.9 L471.4,853.0 L469.1,854.2 L466.5,854.9 L464.0,855.7 L462.3,857.9 L463.3,860.3 L464.5,862.6 L466.1,864.8 L466.2,867.5 L466.5,870.2 L468.8,872.1 L468.0,875.2 L470.4,877.0 L470.5,879.8 L472.8,881.6 L473.2,884.3 L474.7,886.5 L474.4,889.6 L475.6,891.9 L477.1,894.1 L478.7,896.2 L477.0,898.7 L477.9,901.7 L476.7,904.3 L477.3,907.2 L476.3,909.8 L476.0,912.6 L473.5,911.7 L471.7,909.4 L468.6,909.4 L466.8,907.2 L464.6,905.7 L462.3,904.4 L461.7,901.6 L460.1,899.1 L459.6,896.2 L457.1,896.0 L454.7,894.7 L452.0,896.3 L449.7,894.7 L447.1,895.5 L444.5,896.0 L442.1,895.5 L439.5,895.5 L437.3,892.8 L434.8,892.8 L432.2,893.5 L430.1,895.0 L428.7,897.1 L427.9,899.5 L426.7,901.7 L424.1,901.1 L421.8,903.4 L419.2,902.4 L416.7,903.2 L414.2,902.8 L411.7,903.1 L409.1,902.5 L406.6,903.4 L404.1,903.8 L401.6,903.7 L399.1,903.9 L396.6,904.4 L394.5,905.6 L392.2,906.5 L390.1,907.9 L387.5,908.3 L385.9,910.3 L383.8,911.7 L382.2,913.8 L379.5,913.9 L377.5,915.4 L374.6,914.7 L372.1,917.0 L369.1,915.7 L366.4,916.4 L363.8,918.0 L361.0,918.1 L358.2,916.8 L357.5,913.4 L354.7,912.1 L352.8,909.9 L350.4,909.3 L347.9,909.5 L345.6,908.7 L343.2,908.2 L340.8,907.5 L338.2,908.3 L335.7,908.9 L333.4,907.5 L331.0,907.2 L329.7,909.4 L329.6,912.0 L328.1,914.1 L329.3,917.0 L328.7,919.5 L326.3,921.4 L326.9,924.1 L325.5,926.3 L322.7,927.1 L319.6,926.9 L317.3,929.0 L315.3,927.4 L314.6,924.8 L311.9,923.7 L310.4,921.7 L309.3,919.4 L308.8,916.6 L306.3,915.4 L304.1,914.4 L301.9,913.2 L299.6,912.3 L297.0,912.0 L295.1,910.3 L293.2,908.7 L291.4,906.9 L288.6,906.9 L286.2,906.3 L284.4,904.4 L282.3,903.0 L279.6,903.9 L277.5,902.0 L274.9,902.4 L272.6,901.7 L270.1,901.8 L267.7,901.4 L265.6,900.0 L263.5,898.3 L260.9,899.0 L258.4,899.0 L256.6,896.3 L254.1,896.0 L251.6,896.2 L249.0,894.6 L246.0,896.0 L243.3,895.2 L240.7,894.0 L238.0,893.5 L235.2,893.5 L232.4,893.6 L229.5,893.4 L226.9,894.7 L224.1,894.9 L221.3,894.7 L218.7,896.2 L215.8,895.9 L213.9,898.3 L211.6,899.5 L209.3,900.8 L206.9,901.7 L203.9,901.1 L202.0,903.5 L199.5,904.2 L196.8,904.4 L194.3,904.0 L191.8,903.9 L189.6,905.6 L187.1,905.5 L184.8,906.5 L182.3,906.7 L179.7,905.7 L177.4,906.9 L175.0,907.2 L173.6,904.4 L171.0,902.9 L168.2,901.5 L166.7,898.9 L166.1,896.3 L167.5,894.0 L168.7,891.6 L166.8,888.9 L168.5,886.5 L168.9,884.1 L169.1,881.6 L168.1,879.0 L170.3,876.7 L170.5,874.2 L169.5,871.6 L170.9,869.4 L171.0,866.8 L171.6,864.4 L173.0,862.1 L171.5,859.2 L174.4,857.3 L172.6,854.3 L173.3,851.9 L175.0,849.7 L174.6,847.1 L176.6,845.1 L177.0,842.7 L176.5,840.1 L178.1,838.0 L178.0,835.5 L178.0,833.0 L179.1,830.8 L179.5,828.4 L180.2,826.0 L180.9,823.7 L181.9,821.5 L181.6,818.9 L183.2,816.8 L185.1,815.1 L186.8,813.3 L186.8,810.3 L189.6,809.2 L189.4,806.0 L191.4,804.4 L193.8,803.1 L195.5,801.3 L196.4,798.8 L197.9,796.9 L200.0,795.4 L200.5,792.6 L202.3,790.9 L204.4,789.3 L205.0,786.7 L205.5,784.3 L208.1,782.7 L207.8,779.9 L210.1,778.3 L210.7,775.9 L211.6,773.6 L213.0,771.5 L213.8,769.2 L214.8,766.9 L214.8,764.2 L216.0,762.1 L215.7,759.4 L216.0,756.9 L216.6,754.5 L219.3,752.6 L219.5,750.1 L220.2,747.6 L221.5,745.4 L222.0,742.9 L221.5,740.2 L220.3,736.8 L217.4,734.7 L219.9,734.5 L222.5,734.7 L225.0,734.3 L227.2,732.4 L229.7,732.0 L229.9,734.8 L231.7,736.9 L233.0,739.1 L234.3,741.4 L236.3,743.4 L236.0,746.4 L237.9,748.4 L240.3,747.8 L242.1,745.8 L244.8,745.7 L245.8,742.5 L248.2,741.9 L250.5,741.0 L252.4,739.2 L255.2,739.3 L257.0,737.5 L257.2,735.0 L256.3,732.6 L257.4,730.0 L256.1,727.7 L255.4,725.3 L254.6,722.9 L254.4,720.4 L255.6,717.8 L254.1,715.5 L254.9,712.9 L254.2,710.5 L253.3,708.2 L253.1,705.7 L253.2,703.2 L253.7,700.7 L252.9,698.3 L252.7,695.8 L251.5,693.5 L251.6,691.0 L254.0,690.1 L256.5,689.9 L259.0,690.7 L261.3,689.1 L263.8,688.6 L266.3,689.2 L268.8,688.6 L271.2,688.0 L273.6,687.5 L276.2,688.2 L276.1,685.4 L277.0,682.9 L278.9,680.8 L280.1,678.5 L282.7,677.1 L284.4,675.1 L285.8,672.9 L286.3,670.0 L289.1,668.8 L288.5,665.2 L292.1,664.5 L292.6,661.7 L294.5,660.1 L296.4,658.5 L299.2,658.4 L300.5,655.8 L303.5,656.0 L305.4,654.3 L306.9,652.1 L310.2,652.8 L311.8,650.7 L314.7,652.6 L318.0,654.0 Z" fill="#f0821e" stroke="none"/>
<path d="M101.0,737.5 L103.7,737.4 L106.5,738.0 L109.2,737.9 L112.0,737.8 L114.7,737.5 L116.9,736.1 L119.7,736.3 L122.1,735.5 L124.1,733.5 L126.7,733.2 L129.5,733.6 L131.9,732.6 L134.1,731.2 L136.6,730.6 L139.3,731.1 L141.5,732.5 L143.4,734.7 L146.4,734.4 L148.7,735.7 L150.9,737.2 L153.0,738.8 L154.4,741.2 L154.8,743.9 L156.6,746.0 L156.5,748.9 L156.4,751.8 L158.5,753.9 L157.1,756.0 L156.1,758.3 L156.6,761.1 L154.2,762.9 L155.4,765.9 L153.7,767.9 L153.0,770.3 L150.4,771.5 L147.8,772.6 L145.1,773.7 L141.8,772.5 L139.4,774.4 L137.4,772.7 L134.4,773.5 L132.2,772.5 L130.4,770.4 L128.4,768.9 L125.7,768.9 L123.9,767.1 L122.4,765.1 L121.6,762.5 L119.6,760.9 L117.5,759.4 L114.8,758.5 L114.2,755.0 L111.9,753.6 L108.8,753.1 L107.0,751.1 L105.0,749.3 L102.5,748.1 L101.0,745.7 L100.3,743.0 L100.9,740.2 Z" fill="#dcdcdc" stroke="#383838" stroke-width="1" stroke-linejoin="round"/>
<path d="M290.0,373.2 L291.4,370.5 L290.9,367.5 L294.7,370.3 L296.6,368.4 L298.9,366.9 L300.4,364.6 L302.7,362.8 L304.9,361.0 L307.8,360.1 L309.9,358.0 L313.3,358.1 L316.5,357.0 L314.4,359.5 L314.6,362.7 L316.0,365.5 L318.4,367.5 L317.4,369.8 L316.4,372.2 L314.6,374.1 L316.7,376.0 L318.9,377.8 L320.2,380.4 L322.4,382.3 L324.1,384.5 L320.8,385.8 L318.4,388.3 L316.3,386.6 L313.1,387.1 L311.4,384.5 L308.9,383.6 L306.0,384.3 L303.1,385.2 L300.4,386.4 L298.7,384.2 L295.7,383.1 L294.3,380.6 L293.4,377.6 L290.9,376.0 Z" fill="#fcb240" stroke="#383838" stroke-width="1" stroke-linejoin="round"/>
<path d="M219.9,405.4 L222.9,407.4 L226.5,407.3 L229.5,407.7 L231.3,410.1 L234.3,410.2 L237.0,411.3 L239.8,412.0 L242.2,413.3 L244.7,413.6 L247.4,412.9 L247.2,415.5 L246.9,418.1 L248.3,420.5 L246.9,423.3 L244.5,425.3 L241.7,424.4 L239.0,423.1 L236.0,423.4 L233.5,421.8 L232.3,419.3 L231.9,416.2 L229.5,414.6 L228.4,412.0 L226.3,410.6 L223.8,409.8 L221.8,408.2 Z" fill="#fcb849" stroke="#383838" stroke-width="1" stroke-linejoin="round"/>
<path d="M479.6,481.7 L481.5,477.9 L480.9,474.8 L480.8,471.6 L481.4,468.7 L482.1,465.9 L484.5,464.3 L486.5,462.1 L488.8,460.3 L490.9,458.3 L493.5,462.1 L497.9,460.2 L501.0,457.0 L504.2,460.2 L502.9,464.0 L505.1,466.4 L508.0,467.8 L509.1,470.3 L511.8,470.9 L511.1,473.2 L509.9,475.4 L512.1,477.2 L515.4,476.5 L517.5,478.5 L514.8,480.8 L513.7,484.2 L513.3,486.9 L511.1,488.6 L510.6,486.0 L508.6,484.2 L506.2,483.1 L503.7,482.5 L501.0,482.9 L497.9,484.8 L494.1,482.3 L490.6,482.0 L487.1,481.7 L482.7,483.6 Z" fill="#662506" stroke="#383838" stroke-width="1" stroke-linejoin="round"/>
<path d="M226.8,245.3 L229.3,246.1 L231.9,245.8 L234.5,246.1 L237.2,244.8 L239.7,246.1 L242.3,245.0 L244.9,245.5 L247.4,245.9 L250.0,246.3 L252.6,246.9 L255.0,248.0 L256.9,250.2 L259.6,250.6 L262.3,250.9 L264.8,251.7 L266.8,253.7 L269.2,252.5 L272.0,252.3 L273.8,249.8 L276.9,250.2 L279.4,249.2 L281.5,247.4 L284.4,247.4 L285.9,250.4 L289.2,249.8 L290.8,252.4 L293.9,252.2 L295.2,255.6 L298.3,255.4 L300.5,256.8 L301.4,259.5 L303.4,261.7 L304.7,264.2 L304.0,267.1 L306.5,269.3 L307.3,271.9 L306.8,274.7 L305.0,277.1 L306.1,280.0 L304.3,282.4 L304.7,285.2 L307.4,285.5 L310.0,285.9 L312.8,285.9 L315.2,287.3 L315.2,290.8 L317.3,293.7 L320.4,294.2 L322.6,291.1 L325.7,291.5 L327.8,292.8 L329.7,294.2 L332.2,294.7 L334.4,295.7 L336.5,297.0 L337.7,299.6 L340.8,299.2 L342.3,301.4 L344.7,302.0 L347.0,301.0 L349.6,301.1 L351.4,298.5 L354.2,299.1 L356.4,297.8 L358.6,296.4 L361.4,297.2 L363.6,295.8 L364.6,298.1 L364.6,300.6 L364.6,303.1 L365.6,305.4 L366.8,307.6 L365.4,310.4 L366.8,312.6 L364.7,313.9 L362.4,314.9 L360.7,316.7 L359.5,319.1 L357.1,319.9 L354.2,320.1 L353.2,322.9 L351.6,324.8 L348.9,325.2 L350.5,327.6 L349.9,330.9 L351.8,333.2 L353.1,335.7 L355.4,336.2 L357.6,334.7 L360.4,334.9 L363.2,335.2 L365.5,334.0 L367.9,333.1 L370.4,332.4 L372.6,330.9 L372.9,333.6 L374.6,335.4 L376.4,337.2 L379.2,337.5 L381.2,339.8 L384.3,339.3 L386.5,341.0 L388.3,338.3 L388.6,335.2 L389.1,332.1 L391.5,330.6 L393.1,328.5 L393.9,325.8 L394.7,323.1 L396.7,321.4 L398.2,319.2 L400.4,317.6 L402.8,316.1 L405.5,317.5 L408.1,317.4 L410.7,317.6 L413.0,315.4 L415.7,316.5 L418.0,314.8 L420.5,314.2 L423.2,315.1 L423.9,312.4 L426.9,311.6 L428.2,309.4 L430.0,307.4 L433.2,307.8 L434.9,305.7 L437.1,304.3 L439.3,302.8 L440.0,300.3 L440.9,298.0 L441.6,295.4 L442.3,292.8 L445.4,291.6 L446.7,289.3 L447.2,286.6 L451.0,288.5 L453.4,288.8 L455.8,289.8 L458.2,287.4 L460.6,289.2 L463.0,288.3 L465.4,290.1 L467.8,288.8 L470.2,289.6 L472.6,290.3 L475.0,289.2 L477.0,287.4 L477.5,284.8 L478.8,282.5 L480.0,280.3 L479.9,277.3 L481.3,274.6 L483.8,273.9 L486.3,274.0 L488.3,272.4 L488.9,269.9 L490.1,267.7 L492.9,266.2 L495.9,265.8 L499.0,266.4 L497.7,268.8 L497.7,271.6 L496.5,274.0 L499.8,275.0 L502.8,276.5 L505.7,277.3 L508.7,276.3 L511.6,277.2 L512.8,279.9 L512.2,282.8 L509.1,284.6 L507.8,287.9 L508.0,291.0 L510.2,293.6 L510.3,296.7 L513.6,298.2 L516.7,299.9 L514.9,301.8 L514.1,304.3 L511.2,304.3 L509.0,302.6 L506.7,300.9 L504.0,300.5 L501.7,302.0 L500.1,304.3 L496.8,304.5 L495.2,306.9 L492.9,305.4 L489.8,306.7 L487.3,305.9 L485.0,304.3 L483.0,301.7 L480.0,300.5 L482.5,301.6 L483.4,304.1 L484.1,306.7 L486.3,308.1 L488.0,310.1 L490.0,311.6 L492.0,313.3 L494.3,314.3 L496.5,315.7 L497.7,318.3 L499.8,320.4 L500.2,323.3 L502.8,322.5 L505.5,321.8 L507.9,320.4 L509.9,317.9 L513.1,318.6 L515.4,317.0 L516.7,319.5 L519.2,320.8 L520.8,323.0 L523.7,323.5 L525.1,325.9 L527.5,327.1 L530.2,328.0 L531.8,330.1 L533.2,332.6 L535.0,334.5 L538.1,334.7 L540.5,336.0 L541.9,338.4 L541.2,341.7 L542.6,344.8 L540.1,346.2 L537.3,344.5 L534.8,345.1 L532.2,346.4 L529.6,346.7 L526.9,345.3 L524.3,345.2 L521.7,346.0 L523.1,348.5 L525.4,350.0 L528.0,351.0 L530.5,351.4 L532.6,353.0 L535.2,353.4 L537.1,355.4 L539.4,356.6 L542.0,356.8 L544.5,357.4 L544.7,360.1 L545.8,362.5 L545.8,365.2 L548.6,367.2 L548.2,370.0 L550.2,373.1 L550.0,376.7 L550.9,379.1 L551.5,381.7 L550.9,384.4 L551.8,386.9 L552.6,389.3 L554.1,391.7 L554.9,394.1 L555.2,396.7 L555.0,399.4 L555.4,402.1 L553.4,404.3 L554.0,407.0 L552.7,409.4 L553.1,412.1 L552.5,414.6 L550.5,416.1 L550.1,418.8 L549.2,421.1 L547.8,423.1 L544.8,423.9 L543.7,426.1 L542.3,428.1 L540.9,430.1 L539.9,432.3 L539.2,434.8 L540.9,437.4 L538.7,439.9 L539.9,442.4 L541.8,444.0 L542.9,446.5 L544.6,448.4 L547.3,449.2 L549.5,450.4 L551.3,452.2 L552.7,454.3 L554.0,456.6 L556.0,458.1 L558.3,459.2 L559.1,462.1 L561.7,462.9 L563.6,464.6 L563.8,467.1 L563.2,469.4 L562.8,471.8 L561.4,474.1 L561.6,476.6 L562.7,479.2 L560.8,481.3 L560.8,483.8 L562.4,486.1 L565.0,487.6 L564.6,491.4 L567.8,492.5 L569.8,494.5 L570.4,497.5 L569.2,499.9 L569.4,502.5 L570.2,505.2 L568.4,507.5 L570.0,510.3 L569.3,512.7 L568.6,515.2 L569.1,517.8 L567.7,520.2 L567.0,522.7 L566.2,525.2 L567.3,527.9 L566.3,530.3 L567.7,532.6 L567.8,535.2 L566.8,538.0 L569.4,540.0 L568.3,542.8 L569.5,545.1 L570.8,547.4 L570.3,550.2 L571.1,552.6 L571.8,555.0 L572.8,557.6 L575.3,558.9 L577.9,560.0 L579.2,562.4 L580.8,564.5 L582.4,566.6 L584.1,568.6 L585.1,570.9 L585.5,573.3 L585.2,575.9 L587.1,578.0 L587.0,580.5 L587.7,582.9 L586.6,585.6 L588.2,587.8 L586.9,590.0 L587.8,592.9 L585.4,594.7 L586.5,597.7 L585.8,600.0 L584.3,602.2 L583.9,604.7 L583.1,607.0 L581.1,609.0 L582.1,611.9 L580.1,613.9 L580.1,616.5 L579.8,619.0 L578.7,621.2 L577.3,623.4 L574.8,621.6 L572.0,621.2 L568.9,621.7 L566.3,620.6 L566.3,617.9 L565.1,615.7 L562.2,614.5 L562.1,611.8 L560.8,609.7 L558.2,608.6 L555.3,609.0 L552.7,607.6 L549.7,608.7 L547.2,607.0 L549.1,608.8 L550.5,610.8 L550.1,613.7 L551.9,615.5 L552.6,617.9 L550.5,619.3 L548.1,620.1 L545.3,620.0 L543.8,622.8 L541.4,623.5 L538.7,623.7 L536.3,624.6 L534.7,627.1 L532.0,627.3 L530.3,629.5 L527.3,629.0 L525.5,631.2 L523.0,631.6 L520.8,632.9 L518.6,634.1 L515.9,634.3 L513.7,635.7 L511.6,637.0 L509.4,638.3 L507.6,640.1 L505.6,641.7 L502.9,642.1 L500.1,642.2 L498.0,643.5 L496.8,646.6 L494.5,647.7 L491.6,647.6 L489.2,648.5 L487.3,650.3 L485.7,652.5 L483.6,653.9 L480.7,653.9 L479.4,656.6 L477.2,657.9 L474.7,658.7 L472.1,659.2 L470.2,660.9 L467.8,661.7 L466.1,663.7 L463.9,664.8 L460.8,664.2 L459.8,667.5 L457.1,667.7 L455.2,669.2 L452.6,669.6 L450.5,671.0 L448.3,671.9 L446.2,673.2 L444.7,675.5 L441.5,674.8 L439.9,677.0 L437.7,678.1 L436.1,680.5 L435.3,683.3 L433.5,685.6 L432.2,688.2 L433.4,690.5 L436.0,691.2 L436.7,694.0 L439.3,694.8 L441.3,696.2 L442.5,698.5 L444.4,700.0 L445.9,701.9 L444.6,704.5 L446.1,707.6 L443.5,709.9 L443.8,712.8 L444.7,715.7 L443.2,718.3 L443.1,721.0 L446.4,722.3 L446.0,725.1 L446.0,727.8 L448.6,729.3 L448.1,732.2 L449.6,734.2 L451.5,736.1 L452.9,738.2 L451.9,741.3 L454.1,743.0 L455.4,745.5 L457.8,746.8 L460.0,748.2 L462.3,749.6 L464.3,751.3 L466.0,753.4 L467.8,755.3 L469.2,757.5 L471.0,759.2 L473.6,760.1 L475.9,761.3 L476.8,764.0 L478.6,765.7 L479.8,768.1 L483.3,768.0 L484.3,770.6 L486.3,772.1 L488.3,773.6 L489.7,775.8 L491.0,777.9 L493.3,779.3 L494.6,781.5 L496.7,783.0 L496.8,786.1 L499.1,787.5 L500.6,789.5 L503.2,790.6 L505.9,791.6 L508.7,791.5 L511.7,791.0 L514.3,792.2 L514.1,794.9 L516.5,796.6 L517.3,798.9 L518.5,801.1 L520.1,803.1 L519.8,805.9 L518.2,808.0 L518.4,810.7 L517.7,813.1 L517.5,815.6 L516.3,817.8 L514.7,819.9 L514.6,822.5 L514.3,825.0 L511.5,824.5 L509.1,822.4 L505.9,823.3 L503.2,822.1 L500.6,820.9 L499.8,823.3 L499.1,825.8 L500.2,828.6 L498.0,830.8 L497.4,833.3 L497.9,836.0 L495.3,836.9 L493.4,838.8 L490.7,839.5 L489.1,842.0 L487.1,843.9 L484.2,844.2 L481.7,845.1 L479.1,845.8 L477.5,848.2 L475.2,849.3 L473.8,851.9 L471.4,853.0 L469.1,854.2 L466.5,854.9 L464.0,855.7 L462.3,857.9 L463.3,860.3 L464.5,862.6 L466.1,864.8 L466.2,867.5 L466.5,870.2 L468.8,872.1 L468.0,875.2 L470.4,877.0 L470.5,879.8 L472.8,881.6 L473.2,884.3 L474.7,886.5 L474.4,889.6 L475.6,891.9 L477.1,894.1 L478.7,896.2 L477.0,898.7 L477.9,901.7 L476.7,904.3 L477.3,907.2 L476.3,909.8 L476.0,912.6 L473.5,911.7 L471.7,909.4 L468.6,909.4 L466.8,907.2 L464.6,905.7 L462.3,904.4 L461.7,901.6 L460.1,899.1 L459.6,896.2 L457.1,896.0 L454.7,894.7 L452.0,896.3 L449.7,894.7 L447.1,895.5 L444.5,896.0 L442.1,895.5 L439.5,895.5 L437.3,892.8 L434.8,892.8 L432.2,893.5 L430.1,895.0 L428.7,897.1 L427.9,899.5 L426.7,901.7 L424.1,901.1 L421.8,903.4 L419.2,902.4 L416.7,903.2 L414.2,902.8 L411.7,903.1 L409.1,902.5 L406.6,903.4 L404.1,903.8 L401.6,903.7 L399.1,903.9 L396.6,904.4 L394.5,905.6 L392.2,906.5 L390.1,907.9 L387.5,908.3 L385.9,910.3 L383.8,911.7 L382.2,913.8 L379.5,913.9 L377.5,915.4 L374.6,914.7 L372.1,917.0 L369.1,915.7 L366.4,916.4 L363.8,918.0 L361.0,918.1 L358.2,916.8 L357.5,913.4 L354.7,912.1 L352.8,909.9 L350.4,909.3 L347.9,909.5 L345.6,908.7 L343.2,908.2 L340.8,907.5 L338.2,908.3 L335.7,908.9 L333.4,907.5 L331.0,907.2 L329.7,909.4 L329.6,912.0 L328.1,914.1 L329.3,917.0 L328.7,919.5 L326.3,921.4 L326.9,924.1 L325.5,926.3 L322.7,927.1 L319.6,926.9 L317.3,929.0 L315.3,927.4 L314.6,924.8 L311.9,923.7 L310.4,921.7 L309.3,919.4 L308.8,916.6 L306.3,915.4 L304.1,914.4 L301.9,913.2 L299.6,912.3 L297.0,912.0 L295.1,910.3 L293.2,908.7 L291.4,906.9 L288.6,906.9 L286.2,906.3 L284.4,904.4 L282.3,903.0 L279.6,903.9 L277.5,902.0 L274.9,902.4 L272.6,901.7 L270.1,901.8 L267.7,901.4 L265.6,900.0 L263.5,898.3 L260.9,899.0 L258.4,899.0 L256.6,896.3 L254.1,896.0 L251.6,896.2 L249.0,894.6 L246.0,896.0 L243.3,895.2 L240.7,894.0 L238.0,893.5 L235.2,893.5 L232.4,893.6 L229.5,893.4 L226.9,894.7 L224.1,894.9 L221.3,894.7 L218.7,896.2 L215.8,895.9 L213.9,898.3 L211.6,899.5 L209.3,900.8 L206.9,901.7 L203.9,901.1 L202.0,903.5 L199.5,904.2 L196.8,904.4 L194.3,904.0 L191.8,903.9 L189.6,905.6 L187.1,905.5 L184.8,906.5 L182.3,906.7 L179.7,905.7 L177.4,906.9 L175.0,907.2 L173.6,904.4 L171.0,902.9 L168.2,901.5 L166.7,898.9 L166.1,896.3 L167.5,894.0 L168.7,891.6 L166.8,888.9 L168.5,886.5 L168.9,884.1 L169.1,881.6 L168.1,879.0 L170.3,876.7 L170.5,874.2 L169.5,871.6 L170.9,869.4 L171.0,866.8 L171.6,864.4 L173.0,862.1 L171.5,859.2 L174.4,857.3 L172.6,854.3 L173.3,851.9 L175.0,849.7 L174.6,847.1 L176.6,845.1 L177.0,842.7 L176.5,840.1 L178.1,838.0 L178.0,835.5 L178.0,833.0 L179.1,830.8 L179.5,828.4 L180.2,826.0 L180.9,823.7 L181.9,821.5 L181.6,818.9 L183.2,816.8 L185.1,815.1 L186.8,813.3 L186.8,810.3 L189.6,809.2 L189.4,806.0 L191.4,804.4 L193.8,803.1 L195.5,801.3 L196.4,798.8 L197.9,796.9 L200.0,795.4 L200.5,792.6 L202.3,790.9 L204.4,789.3 L205.0,786.7 L202.6,786.1 L200.2,785.5 L198.3,783.2 L195.5,784.0 L193.4,782.5 L191.2,781.3 L188.6,781.3 L186.4,779.7 L183.9,779.8 L181.6,779.1 L178.9,781.2 L176.6,780.2 L174.3,778.8 L172.0,777.8 L169.5,778.5 L167.2,777.2 L165.2,775.2 L162.2,775.5 L159.6,774.8 L157.3,773.4 L155.8,770.6 L153.0,770.3 L150.4,771.5 L147.8,772.6 L145.1,773.7 L141.8,772.5 L139.4,774.4 L137.4,772.7 L134.4,773.5 L132.2,772.5 L130.4,770.4 L128.4,768.9 L125.7,768.9 L123.9,767.1 L122.4,765.1 L121.6,762.5 L119.6,760.9 L117.5,759.4 L114.8,758.5 L114.2,755.0 L111.9,753.6 L108.8,753.1 L107.0,751.1 L105.0,749.3 L102.5,748.1 L101.0,745.7 L100.3,743.0 L100.9,740.2 L101.0,737.5 L102.8,735.4 L103.0,732.7 L105.0,730.6 L103.6,727.4 L106.3,725.6 L107.2,723.2 L107.9,720.6 L109.5,718.4 L109.3,715.6 L107.8,713.5 L105.1,713.0 L103.8,710.5 L100.7,710.4 L99.5,708.0 L97.4,706.6 L95.0,705.6 L92.9,704.3 L92.2,701.1 L89.0,701.2 L87.4,699.2 L87.1,696.6 L88.4,693.9 L86.2,691.3 L87.2,688.7 L86.6,686.1 L88.7,683.4 L87.4,680.8 L89.7,679.7 L91.0,677.6 L91.8,675.0 L93.7,673.5 L95.6,672.0 L97.4,670.4 L98.4,668.0 L101.0,667.2 L99.6,665.2 L99.7,662.4 L98.1,660.5 L96.6,658.5 L95.5,656.3 L94.4,654.1 L92.3,652.4 L92.8,649.4 L91.3,647.5 L90.1,645.3 L89.0,642.9 L87.8,640.6 L86.2,638.5 L85.3,636.0 L85.4,633.1 L83.9,630.9 L83.1,628.4 L81.9,626.1 L81.6,623.4 L79.4,621.5 L78.5,619.1 L77.4,616.7 L75.7,614.6 L76.8,611.3 L74.1,609.7 L73.7,607.0 L74.4,604.3 L76.2,602.6 L77.4,600.4 L80.0,599.3 L82.1,597.7 L83.8,595.9 L84.6,593.3 L85.5,590.9 L87.4,588.9 L87.2,586.1 L88.1,583.7 L89.5,581.5 L91.1,579.4 L91.5,576.8 L91.7,574.3 L90.6,571.9 L90.8,569.4 L89.2,567.2 L90.2,564.5 L88.9,562.2 L87.2,560.1 L86.8,557.6 L87.4,555.0 L85.5,553.0 L84.4,550.6 L84.8,547.6 L82.7,545.6 L82.2,543.0 L80.7,540.8 L81.0,537.9 L79.2,535.8 L80.6,533.3 L83.7,532.9 L85.1,530.4 L87.4,529.0 L89.9,529.1 L92.0,530.6 L94.6,529.9 L96.6,531.9 L99.3,531.0 L101.6,531.9 L103.8,533.0 L106.1,531.8 L108.4,530.6 L110.9,529.6 L113.7,529.8 L116.0,528.6 L118.6,528.0 L120.9,526.9 L123.4,525.9 L125.7,524.8 L125.0,522.1 L125.6,519.4 L126.2,516.6 L125.1,513.9 L125.7,511.2 L127.2,508.9 L129.5,507.5 L131.4,505.7 L133.4,503.9 L135.3,502.0 L136.7,499.6 L139.1,498.2 L140.7,496.1 L138.9,493.8 L140.7,490.7 L139.7,488.3 L139.4,485.7 L138.6,483.2 L136.8,480.9 L136.6,478.3 L133.8,478.1 L132.1,475.9 L129.9,474.7 L127.8,473.3 L125.7,471.9 L123.7,470.3 L121.1,469.7 L118.8,468.7 L120.2,466.1 L120.2,463.1 L121.6,460.5 L124.3,459.4 L127.0,459.7 L129.8,460.6 L132.6,460.6 L135.3,460.4 L138.0,459.2 L140.7,459.2 L139.7,456.8 L141.1,454.4 L140.9,452.0 L140.7,449.6 L140.3,447.2 L141.1,444.8 L140.9,442.4 L142.9,440.3 L142.2,437.1 L143.2,434.6 L143.6,431.9 L146.1,429.9 L147.0,427.4 L148.0,424.9 L148.5,422.2 L148.1,419.4 L148.6,416.8 L151.3,414.8 L151.0,412.0 L151.4,409.4 L151.9,406.9 L150.7,404.4 L151.2,401.8 L148.9,399.5 L149.7,396.9 L146.9,396.6 L144.2,395.5 L141.1,396.6 L138.6,394.6 L135.8,394.4 L136.2,391.9 L137.8,389.5 L135.9,386.7 L137.7,384.3 L137.7,381.8 L138.6,379.3 L138.3,376.7 L140.0,375.0 L141.6,373.2 L143.4,371.6 L145.3,369.8 L147.6,368.9 L150.1,368.2 L152.8,368.3 L154.3,365.5 L157.4,366.5 L159.2,364.4 L161.3,362.9 L163.7,362.3 L166.1,361.5 L168.7,362.5 L171.2,361.8 L173.6,360.2 L176.2,360.7 L178.7,359.5 L181.2,359.2 L183.8,359.6 L186.4,360.6 L188.8,358.8 L191.4,359.0 L193.3,360.9 L195.0,363.0 L197.4,364.4 L199.0,366.6 L197.6,369.0 L198.2,371.6 L198.9,374.3 L198.3,376.8 L196.6,379.1 L196.5,381.7 L198.1,384.1 L201.2,384.4 L202.6,387.2 L205.3,388.0 L206.1,385.7 L206.9,383.4 L207.3,381.1 L206.8,378.5 L207.2,376.1 L208.0,373.8 L209.1,371.6 L211.1,373.6 L213.5,374.5 L216.6,373.8 L218.8,375.3 L221.2,376.2 L223.7,376.9 L223.9,373.9 L222.6,371.2 L221.8,368.4 L220.7,366.0 L219.7,363.5 L219.9,360.8 L221.3,358.4 L222.4,355.8 L223.7,353.3 L223.7,350.4 L224.6,347.5 L227.6,345.8 L228.4,342.8 L232.2,343.8 L233.7,346.1 L236.0,347.6 L239.1,349.2 L242.6,348.5 L245.4,347.5 L248.5,347.8 L251.2,346.6 L254.9,343.8 L252.6,342.8 L250.1,342.5 L248.0,341.0 L245.5,340.0 L243.4,337.8 L243.9,334.5 L242.8,331.9 L241.5,329.4 L242.0,326.7 L243.6,324.7 L245.8,323.1 L244.5,320.1 L241.5,318.9 L240.5,316.4 L240.0,313.7 L239.2,311.2 L239.4,308.4 L237.5,306.7 L235.2,305.8 L232.3,306.4 L230.8,303.7 L228.0,304.0 L225.8,303.1 L226.5,300.5 L226.8,297.9 L228.7,295.6 L231.1,293.8 L233.1,291.5 L235.7,292.3 L238.1,291.6 L240.4,289.8 L243.1,290.9 L245.5,289.9 L247.9,289.4 L250.0,285.2 L247.6,283.7 L247.3,280.9 L246.4,278.3 L243.4,277.3 L242.6,274.7 L240.3,273.1 L239.4,270.5 L237.3,268.8 L235.5,266.8 L233.9,264.8 L233.1,262.1 L232.1,259.6 L230.8,257.1 L230.9,254.2 L230.0,251.6 L228.8,248.2 Z" fill="none" stroke="#383838" stroke-width="1" stroke-linejoin="round"/>
<path d="M254.9,343.8 L257.1,344.9 L259.4,345.7 L262.0,345.5 L264.8,345.6 L267.0,346.8 L269.1,348.5 L271.0,350.7 L271.9,353.2 L272.0,356.1 L273.8,357.8 L275.0,360.2 L277.7,360.8 L279.5,363.9 L279.6,367.5 L281.9,369.4 L284.3,371.3 L287.1,372.3 L290.0,373.2 L291.4,370.5 L290.9,367.5 L294.7,370.3 L296.6,368.4 L298.9,366.9 L300.4,364.6 L302.7,362.8 L304.9,361.0 L307.8,360.1 L309.9,358.0 L313.3,358.1 L316.5,357.0 L314.4,359.5 L314.6,362.7 L316.0,365.5 L318.4,367.5 L317.4,369.8 L316.4,372.2 L314.6,374.1 L316.7,376.0 L318.9,377.8 L320.2,380.4 L322.4,382.3 L324.1,384.5 L326.2,386.1 L328.8,386.6 L331.0,388.0 L334.0,388.5 L336.5,390.5 L339.5,391.0" fill="none" stroke="#383838" stroke-width="1" stroke-linejoin="round"/>
<path d="M355.4,336.2 L353.9,338.3 L352.9,340.6 L350.3,341.9 L350.2,345.0 L347.8,346.3 L348.5,348.8 L349.0,351.3 L350.2,353.5 L352.5,355.2 L353.5,357.5 L355.7,359.3 L356.0,361.9 L357.9,363.8 L357.9,366.6 L355.6,368.6 L356.5,372.2 L355.1,374.7 L352.9,376.7 L351.1,378.5 L349.1,379.9 L347.1,381.4 L344.2,381.5 L341.9,382.4 L340.2,384.3 L340.7,387.7 L339.5,391.0" fill="none" stroke="#383838" stroke-width="1" stroke-linejoin="round"/>
<path d="M339.5,391.0 L341.8,392.5 L344.0,394.2 L346.8,394.8 L349.2,396.1 L351.6,397.4 L354.2,394.8 L357.9,394.2 L359.3,396.6 L361.0,398.8 L362.6,401.0 L364.4,403.1 L365.3,405.8 L366.5,408.0 L368.2,409.8 L371.2,410.0 L372.6,412.1 L374.7,413.7 L376.8,415.3" fill="none" stroke="#383838" stroke-width="1" stroke-linejoin="round"/>
<path d="M376.8,415.3 L379.4,415.2 L382.1,415.3 L384.7,416.0 L387.3,415.2 L390.0,414.3 L392.6,415.3 L394.5,413.0 L394.6,409.7 L397.5,407.8 L397.9,404.7 L401.2,404.1 L404.2,405.6 L407.4,405.8 L409.1,403.9 L410.8,402.0 L411.9,399.5 L415.3,399.3 L416.6,397.0 L417.4,394.2 L420.0,393.2 L422.6,393.8 L425.3,393.6 L427.8,394.2 L430.5,394.2 L432.0,396.7 L434.7,397.5 L436.2,399.8 L439.2,400.2 L441.4,401.7 L443.2,403.7 L445.5,404.4 L447.9,405.1 L450.3,405.5 L452.8,405.6 L454.9,407.4 L457.2,408.2 L460.1,406.6 L462.4,407.3 L464.5,409.3 L467.2,408.3 L469.5,409.2 L471.5,411.5 L474.2,410.8 L476.9,410.3 L479.0,408.8 L481.6,408.2 L483.8,406.9 L485.5,404.4 L488.2,404.0 L490.4,402.6 L492.2,400.5 L494.9,400.1 L497.6,399.7 L499.9,398.5 L502.0,396.9 L503.8,395.3 L504.7,392.8 L506.3,390.9 L507.5,388.7 L509.8,387.5 L511.2,385.6 L513.6,384.4 L514.7,382.1 L516.0,380.0 L518.7,379.1 L519.6,376.7 L522.0,377.6 L524.4,378.6 L526.1,380.7 L528.8,381.1 L530.8,382.8 L533.3,383.4 L535.8,384.1 L537.4,386.7 L539.6,387.8 L542.4,388.0 L541.1,390.2 L540.2,392.5 L540.0,395.0 L537.9,396.9 L538.6,399.8 L537.3,402.0 L540.0,402.7 L542.2,400.2 L545.0,401.5 L547.4,400.6 L550.0,400.4 L552.6,400.7 L555.0,399.4" fill="none" stroke="#383838" stroke-width="1" stroke-linejoin="round"/>
<path d="M376.8,415.3 L378.9,417.1 L381.2,418.8 L382.1,421.6 L384.8,420.6 L387.4,419.5 L389.8,421.6 L392.9,422.5 L395.8,423.7" fill="none" stroke="#383838" stroke-width="1" stroke-linejoin="round"/>
<path d="M395.8,423.7 L397.6,425.5 L399.9,426.8 L401.5,428.9 L403.4,430.6 L405.3,432.3 L407.7,433.5 L409.5,435.3 L412.0,435.7 L414.6,436.0 L417.1,436.2 L419.6,436.7 L422.0,437.8 L424.3,439.6 L427.2,438.2 L429.5,439.5 L431.2,442.4 L431.6,445.8 L431.6,448.6 L431.9,451.3 L431.9,454.1 L430.2,456.7 L430.5,459.5 L430.1,462.3 L429.1,464.9 L429.2,467.8 L427.0,470.0 L426.7,472.8 L427.0,475.3 L427.4,477.8 L428.3,480.1 L430.4,481.9 L430.4,484.6 L432.2,486.5 L432.8,489.0 L431.4,491.3 L430.9,493.6 L431.3,496.1 L430.1,498.4 L430.9,500.9 L430.9,503.3 L430.8,505.7 L433.5,506.3 L435.3,508.1 L437.1,509.8 L439.4,510.8 L441.5,512.3 L443.1,514.3 L445.1,515.8 L446.4,518.2 L448.6,519.4 L451.0,520.0 L453.5,520.5 L456.1,520.3 L458.4,521.3 L460.7,522.4 L463.2,522.6 L465.4,524.2 L467.8,524.8 L469.7,526.4 L472.1,527.2 L474.0,528.8 L475.8,530.7 L477.7,532.2 L480.6,532.4 L481.7,535.1 L484.2,535.8 L485.1,538.7 L482.7,541.2 L483.8,544.1 L483.8,546.8 L482.8,549.5" fill="none" stroke="#383838" stroke-width="1" stroke-linejoin="round"/>
<path d="M395.8,423.7 L393.4,425.5 L393.7,429.2 L390.5,430.4 L389.5,433.2 L387.1,435.0 L384.4,436.1 L381.4,436.6 L379.0,438.4 L376.5,438.4 L374.0,438.5 L371.9,436.1 L369.5,436.0 L367.1,435.2 L364.4,436.2 L362.1,435.3 L359.6,436.4 L356.7,436.5 L354.4,438.1 L351.6,438.4 L349.5,440.5 L350.3,443.3 L349.9,446.3 L350.8,449.2 L350.5,452.1 L352.1,454.4 L354.6,456.0 L356.4,458.2 L357.6,460.9 L360.0,462.6 L359.6,465.1 L359.5,467.6 L360.3,470.0 L360.3,472.5 L362.3,474.7 L361.9,477.2 L362.6,479.6 L362.1,482.1 L362.3,484.6 L363.7,486.8 L363.8,489.3 L364.1,492.0 L364.1,494.6 L362.8,497.0 L362.9,499.7 L361.9,502.1 L363.1,504.9 L361.7,507.3 L361.0,509.9 L361.0,512.5 L359.0,514.3 L356.5,514.2 L353.8,513.6 L351.6,515.0 L349.5,516.2 L346.9,516.1 L344.6,516.8 L342.6,518.6 L340.1,518.8 L337.8,519.4 L338.2,521.8 L338.6,524.2 L337.9,526.7 L337.7,529.2 L338.1,531.6 L337.5,534.1 L338.5,536.5 L339.5,538.8 L339.2,541.3 L340.8,543.8 L340.0,546.8 L341.6,549.3 L341.0,552.2 L340.6,555.1 L341.9,557.7" fill="none" stroke="#383838" stroke-width="1" stroke-linejoin="round"/>
<path d="M482.8,549.5 L484.0,551.8 L484.3,554.3 L483.9,556.9 L483.7,559.5 L483.8,562.0 L485.2,564.3 L487.0,566.5 L485.0,569.4 L486.4,571.7 L487.0,574.1 L489.4,575.3 L492.1,573.7 L494.5,575.2 L497.0,574.6 L499.5,574.8 L501.9,576.3 L504.6,574.7 L507.1,575.0 L509.6,574.8 L512.1,575.5 L514.4,577.4 L517.0,576.8 L519.9,576.3 L521.0,573.4 L522.8,571.4 L526.2,571.7 L527.8,569.4 L530.2,568.3 L532.1,566.4 L533.5,564.0 L536.2,563.2 L538.7,562.8 L541.1,561.6 L543.8,561.9 L546.4,561.9 L548.8,560.9 L551.3,560.3 L554.0,561.1 L556.2,558.8 L559.1,560.3 L561.6,560.2 L563.8,557.9 L566.5,558.2 L569.0,557.7 L571.0,559.5 L574.0,559.8 L574.7,563.4 L578.0,563.5 L579.5,565.9 L581.8,567.2 L584.1,568.6" fill="none" stroke="#383838" stroke-width="1" stroke-linejoin="round"/>
<path d="M482.8,549.5 L480.3,548.6 L477.7,550.5 L475.2,550.5 L472.6,550.7 L470.1,550.8 L467.5,549.9 L465.0,549.5 L462.6,550.1 L460.3,551.1 L457.8,551.4 L455.6,552.5 L453.3,553.4 L451.2,555.0 L448.6,554.8 L446.6,556.8 L443.6,555.6 L442.0,558.5 L439.0,557.3 L436.6,557.9 L434.7,560.0 L432.2,560.4 L432.2,562.9 L430.8,565.0 L430.5,567.4 L430.7,570.0 L429.7,572.2 L427.8,574.2 L428.1,576.8 L428.8,579.1 L429.5,581.5 L428.0,584.1 L430.4,586.2 L430.7,588.6 L430.8,591.0 L431.2,593.4 L431.3,595.8 L432.2,598.1 L431.5,600.7 L432.2,603.0" fill="none" stroke="#383838" stroke-width="1" stroke-linejoin="round"/>
<path d="M432.2,603.0 L429.7,602.4 L427.4,604.4 L425.0,604.4 L422.5,603.4 L420.0,603.6 L417.6,602.9 L415.2,603.6 L412.8,604.9 L410.3,604.2 L408.2,602.9 L406.1,601.6 L404.0,600.3 L401.7,599.4 L399.6,598.1 L396.8,598.5 L394.7,597.1 L392.4,596.4 L389.9,595.9 L387.7,594.9 L385.7,593.3 L384.6,590.6 L384.2,587.8 L382.4,585.4 L382.9,582.3 L381.1,580.2 L378.2,580.2 L375.7,579.5 L373.6,578.0 L372.2,575.2 L369.5,574.7 L366.8,574.4 L364.9,572.6 L362.7,571.3 L360.0,570.8 L358.3,568.6 L356.9,566.4 L356.8,563.5 L354.2,561.9 L354.3,558.9 L351.4,557.4 L350.3,555.0 L350.1,552.2 L347.9,553.4 L345.7,554.4 L344.3,556.8 L341.9,557.7" fill="none" stroke="#383838" stroke-width="1" stroke-linejoin="round"/>
<path d="M432.2,603.0 L434.5,604.0 L436.3,606.0 L439.3,605.7 L440.8,608.1 L443.2,609.1 L445.4,610.3 L446.9,612.7 L450.1,612.1 L452.2,613.4 L454.1,615.2 L452.3,617.1 L449.9,618.1 L447.8,619.7 L445.7,621.1 L443.3,622.2 L441.5,624.3 L438.6,624.4 L437.0,626.7 L434.0,626.8 L432.2,628.8 L431.6,631.6 L431.4,634.4 L430.0,637.0 L429.5,639.8 L427.0,640.6 L424.7,642.0 L422.4,643.2 L419.5,643.4 L417.8,645.8 L415.7,647.5 L413.0,648.0 L412.5,650.9 L414.4,653.4 L414.2,656.3 L416.4,658.7 L415.8,661.7" fill="none" stroke="#383838" stroke-width="1" stroke-linejoin="round"/>
<path d="M415.8,661.7 L413.3,660.9 L410.7,661.0 L408.2,660.4 L405.6,660.4 L403.1,660.3 L400.5,659.9 L398.0,659.7 L395.7,657.6 L392.9,658.9 L390.4,658.3 L388.0,657.0 L385.4,657.5 L383.0,656.2 L382.2,658.7 L380.1,660.6 L378.9,662.9 L377.2,665.1 L376.9,667.8 L374.8,669.7 L374.7,672.6 L372.1,672.6 L369.7,671.9 L367.3,670.8 L365.0,669.7 L362.1,671.4 L359.7,670.3 L357.2,669.8 L354.7,669.5 L352.1,669.4 L349.8,668.3 L347.4,667.2 L346.1,669.3 L344.9,671.4 L343.8,673.6 L343.5,676.2 L341.9,678.1 L341.3,675.4 L339.6,673.3 L337.3,671.5 L335.9,669.3 L335.7,666.3 L333.7,664.4 L330.8,663.9 L329.0,661.7 L327.4,659.3 L325.4,657.5 L321.8,658.0 L320.4,655.2 L318.0,654.0" fill="none" stroke="#383838" stroke-width="1" stroke-linejoin="round"/>
<path d="M415.8,661.7 L417.8,663.3 L418.9,665.9 L421.6,666.8 L423.3,668.8 L424.3,671.3 L426.7,672.6 L428.7,674.1 L431.6,673.7 L433.9,674.8 L435.1,677.9 L437.7,678.1" fill="none" stroke="#383838" stroke-width="1" stroke-linejoin="round"/>
<path d="M341.9,557.7 L339.2,556.7 L336.4,558.8 L333.7,557.7 L331.0,557.8 L329.3,559.8 L327.0,560.7 L325.3,562.8 L322.5,562.7 L320.6,564.5 L318.1,564.9 L316.6,567.4 L313.7,567.0 L311.5,568.1 L310.0,570.6 L307.5,571.1 L305.7,573.0 L303.1,573.1 L300.8,574.1 L301.5,576.9 L303.2,578.7 L306.4,579.3 L306.6,582.5 L308.5,584.2 L311.4,585.0 L312.0,587.8 L313.4,590.0 L316.2,590.9 L317.3,593.3 L316.6,595.9 L315.5,598.2 L313.0,599.7 L312.3,602.3 L310.6,604.3 L310.1,607.1 L307.9,608.8 L307.2,611.4 L305.9,613.6 L303.6,615.2 L302.7,617.6 L303.2,620.2 L301.9,622.6 L301.6,625.0 L301.1,627.5 L301.8,630.1 L300.8,632.5 L300.3,634.9 L302.2,637.6 L301.3,640.0 L300.8,642.5 L303.1,644.0 L305.0,646.1 L307.6,647.2 L308.9,650.0 L311.8,650.7 L314.7,652.6 L318.0,654.0" fill="none" stroke="#383838" stroke-width="1" stroke-linejoin="round"/>
<path d="M270.7,552.2 L272.9,553.6 L275.5,553.6 L278.0,554.0 L279.8,556.3 L282.8,555.3 L284.5,558.0 L287.2,557.7 L287.1,560.3 L286.3,562.6 L284.5,564.8 L285.2,567.5 L283.9,569.8 L284.2,572.5 L283.9,575.0 L282.3,577.2 L281.7,579.6 L284.3,579.6 L286.5,578.3 L289.1,578.2 L291.0,576.0 L293.8,576.6 L295.9,575.1 L298.4,574.7 L300.8,574.1" fill="none" stroke="#383838" stroke-width="1" stroke-linejoin="round"/>
<path d="M140.7,496.1 L143.5,495.8 L144.9,493.4 L146.5,491.5 L148.3,489.7 L150.6,488.7 L152.5,487.1 L154.5,485.6 L157.3,485.3 L158.6,482.9 L160.9,481.9 L163.6,481.4 L166.0,480.7 L167.1,477.8 L169.5,477.0 L172.2,477.4 L174.7,478.0 L176.4,480.8 L179.2,480.9 L181.8,481.3 L183.5,483.9 L186.4,483.8 L188.6,485.2 L188.8,487.9 L190.7,490.1 L191.8,492.6 L192.0,495.3 L191.0,498.3 L193.1,500.5 L194.4,502.9 L194.1,505.7 L193.2,508.0 L190.5,509.2 L189.5,511.5 L188.6,513.9 L191.0,513.0 L193.4,511.6 L196.3,512.6 L198.7,511.5 L201.4,511.4 L203.7,509.9 L206.3,509.7 L208.4,507.6 L211.2,507.8 L213.8,507.7 L215.9,505.3 L218.7,505.7 L217.5,503.4 L216.8,500.8 L217.6,497.9 L215.1,495.9 L215.9,493.0 L213.2,491.1 L214.2,488.0 L212.7,485.8 L212.5,483.1 L210.6,481.0 L210.5,478.3 L212.8,477.1 L215.6,477.4 L217.8,476.1 L220.3,475.5 L222.3,473.5 L225.3,474.2 L227.3,472.3 L229.7,471.5 L229.7,474.2 L232.4,475.6 L232.4,478.3 L234.4,480.1 L235.2,482.4 L237.5,480.7 L240.5,481.3 L243.0,480.3 L245.6,479.3 L247.8,477.4 L250.8,478.0 L253.3,476.8 L255.7,475.6 L255.5,478.1 L254.9,480.5 L254.3,482.9 L252.6,485.1 L254.4,488.0 L251.8,490.0 L253.3,492.8 L252.2,495.1 L251.6,497.5 L254.0,498.9 L253.9,501.8 L255.9,503.5 L256.9,505.8 L258.8,507.5 L258.5,510.5 L261.7,511.4 L262.8,513.7 L262.8,516.5 L264.0,518.7 L265.3,520.7 L268.0,522.0 L268.1,524.8 L269.2,527.0 L270.3,529.2 L272.5,530.7 L273.5,533.0 L272.6,535.3 L273.5,537.9 L271.3,540.0 L271.8,542.5 L270.7,544.8 L270.5,547.3 L271.3,549.8 L270.7,552.2" fill="none" stroke="#383838" stroke-width="1" stroke-linejoin="round"/>
<path d="M270.7,552.2 L269.6,554.5 L266.7,555.1 L266.1,557.8 L262.9,558.1 L262.2,560.8 L260.1,562.2 L259.4,564.9 L257.0,565.9 L254.3,565.9 L251.6,564.7 L248.8,565.3 L246.1,565.9 L244.2,567.5 L242.5,569.4 L241.0,571.6 L238.9,573.0 L237.0,574.6 L234.0,575.0 L233.3,578.0 L230.7,578.9 L228.8,580.5 L227.0,582.3 L229.0,584.2 L230.3,586.6 L230.6,589.5 L233.6,590.8 L233.9,593.7 L235.2,596.0 L232.3,596.6 L231.5,600.3 L228.5,600.8 L225.8,601.7 L224.2,604.2 L222.9,606.4 L221.4,608.4 L219.8,610.3 L217.4,611.4 L215.7,613.2 L214.0,615.0 L212.2,616.7 L210.0,618.0 L208.2,619.6 L205.6,620.3 L204.6,622.8 L202.9,624.5 L201.0,626.0 L202.6,628.8 L203.0,632.0 L201.9,634.9 L199.0,636.0" fill="none" stroke="#383838" stroke-width="1" stroke-linejoin="round"/>
<path d="M199.0,636.0 L195.4,636.4 L192.0,635.0 L191.2,632.3 L189.3,630.3 L187.0,628.6 L186.0,626.0 L183.6,624.0 L182.0,621.6 L182.6,617.8 L180.0,616.0 L177.4,616.1 L175.1,617.1 L173.5,619.5 L171.0,620.0 L168.9,621.8 L167.8,624.4 L165.2,625.8 L164.1,628.4 L162.3,630.5 L160.9,632.8 L158.5,634.3 L156.0,634.9 L154.5,637.1 L151.7,637.2 L150.5,640.0 L148.0,640.7 L145.7,641.6 L144.2,643.8 L141.5,644.1 L139.3,645.1 L137.8,647.3 L135.7,648.8 L133.6,649.9 L131.2,650.7 L129.6,652.8 L128.9,655.4 L126.5,657.2 L127.1,660.4 L124.4,662.1 L124.3,665.0 L122.9,667.2 L120.5,667.9 L118.0,667.4 L115.6,667.9 L113.2,667.2 L110.7,666.1 L108.3,667.8 L105.9,668.1 L103.4,666.1 L101.0,667.2" fill="none" stroke="#383838" stroke-width="1" stroke-linejoin="round"/>
<path d="M199.0,636.0 L200.1,638.2 L200.5,640.6 L202.1,642.6 L202.5,645.0 L201.1,647.4 L198.9,649.3 L196.8,651.2 L194.9,653.3 L194.1,656.2 L195.8,658.4 L196.1,660.9 L196.4,663.4 L196.3,666.0 L198.1,668.1 L197.8,670.8 L199.0,673.1 L198.6,675.8 L199.6,678.1 L197.0,679.2 L195.7,681.7 L193.2,683.0 L190.8,684.2 L188.6,685.7 L187.1,688.1 L186.0,691.0 L183.2,691.8 L185.4,693.0 L188.2,692.2 L190.4,693.2 L192.5,695.0 L195.0,695.2 L197.3,696.1 L199.9,695.7 L202.3,696.4 L203.3,698.7 L205.3,700.3 L205.7,703.0 L207.6,704.7 L210.1,706.0 L211.4,708.1 L211.9,710.7 L212.2,713.5 L214.5,714.9 L214.9,717.6 L216.3,719.6 L218.7,721.0 L218.8,723.8 L217.7,726.4 L217.3,729.2 L216.7,731.9 L217.4,734.7" fill="none" stroke="#383838" stroke-width="1" stroke-linejoin="round"/>
<path d="M217.4,734.7 L219.9,734.5 L222.5,734.7 L225.0,734.3 L227.2,732.4 L229.7,732.0 L229.9,734.8 L231.7,736.9 L233.0,739.1 L234.3,741.4 L236.3,743.4 L236.0,746.4 L237.9,748.4 L240.3,747.8 L242.1,745.8 L244.8,745.7 L245.8,742.5 L248.2,741.9 L250.5,741.0 L252.4,739.2 L255.2,739.3 L257.0,737.5" fill="none" stroke="#383838" stroke-width="1" stroke-linejoin="round"/>
<path d="M257.0,737.5 L257.2,735.0 L256.3,732.6 L257.4,730.0 L256.1,727.7 L255.4,725.3 L254.6,722.9 L254.4,720.4 L255.6,717.8 L254.1,715.5 L254.9,712.9 L254.2,710.5 L253.3,708.2 L253.1,705.7 L253.2,703.2 L253.7,700.7 L252.9,698.3 L252.7,695.8 L251.5,693.5 L251.6,691.0 L254.0,690.1 L256.5,689.9 L259.0,690.7 L261.3,689.1 L263.8,688.6 L266.3,689.2 L268.8,688.6 L271.2,688.0 L273.6,687.5 L276.2,688.2 L276.1,685.4 L277.0,682.9 L278.9,680.8 L280.1,678.5 L282.7,677.1 L284.4,675.1 L285.8,672.9 L286.3,670.0 L289.1,668.8 L288.5,665.2 L292.1,664.5 L292.6,661.7 L294.5,660.1 L296.4,658.5 L299.2,658.4 L300.5,655.8 L303.5,656.0 L305.4,654.3 L306.9,652.1 L310.2,652.8 L311.8,650.7 L314.7,652.6 L318.0,654.0" fill="none" stroke="#383838" stroke-width="1" stroke-linejoin="round"/>
<path d="M257.0,737.5 L258.1,735.3 L259.8,733.4 L262.1,732.0 L261.5,728.6 L263.0,726.6 L265.1,725.0 L265.6,722.4 L268.0,721.0 L270.7,720.4 L273.6,721.2 L276.2,719.6 L279.0,719.9 L281.6,718.2 L284.4,718.3 L286.2,720.3 L287.6,722.6 L290.4,723.7 L291.6,726.2 L292.7,728.7 L294.8,730.5 L296.5,732.5 L298.1,734.7 L299.4,737.0 L302.8,736.8 L304.5,738.8 L306.6,740.1 L307.4,743.2 L309.1,745.0 L311.8,745.7 L312.9,748.1 L313.7,750.5 L312.6,753.3 L314.7,755.5 L315.0,758.0 L314.6,760.6 L316.2,762.9 L315.7,765.6 L317.2,767.9 L316.5,770.6 L317.3,773.0 L319.2,774.9 L320.5,777.3 L322.3,779.3 L324.5,780.9 L326.4,782.9 L328.4,784.7 L329.7,787.1 L331.0,789.5 L329.8,791.9 L331.3,794.4 L330.1,796.8 L329.8,799.2 L329.8,801.7 L330.7,804.1 L331.5,806.5 L329.8,809.0 L331.0,811.4 L328.7,812.8 L328.7,816.0 L326.3,817.3 L325.1,819.5 L322.3,820.5 L320.9,822.5 L320.0,825.0 L317.6,826.1 L316.2,828.0 L315.5,830.7 L313.7,832.4 L311.1,833.3 L310.0,835.6 L308.5,837.5 L306.3,838.7 L307.6,841.0 L307.6,843.6 L308.4,846.0 L307.1,848.9 L309.1,851.1 L308.8,853.8 L308.9,856.3 L311.0,858.5 L311.5,861.0 L310.9,863.7 L311.8,866.1 L310.3,868.5 L311.7,871.2 L311.1,873.6 L311.6,876.2 L310.9,878.7 L310.7,881.2 L311.5,883.8 L311.0,886.3 L308.8,888.6 L308.8,891.1 L309.9,893.8 L309.0,896.2 L307.1,898.2 L304.7,899.3 L302.9,901.4 L299.5,900.9 L297.4,902.7 L295.4,904.4 L292.6,905.2 L289.9,905.4 L287.1,903.5 L284.4,904.4" fill="none" stroke="#383838" stroke-width="1" stroke-linejoin="round"/>
<path d="M217.4,734.7 L220.3,736.8 L221.5,740.2 L222.0,742.9 L221.5,745.4 L220.2,747.6 L219.5,750.1 L219.3,752.6 L216.6,754.5 L216.0,756.9 L215.7,759.4 L216.0,762.1 L214.8,764.2 L214.8,766.9 L213.8,769.2 L213.0,771.5 L211.6,773.6 L210.7,775.9 L210.1,778.3 L207.8,779.9 L208.1,782.7 L205.5,784.3 L205.0,786.7" fill="none" stroke="#383838" stroke-width="1" stroke-linejoin="round"/>
<path d="M438.6,305 L441,300 L447,296 L456,292.5 L466,292 L474,290.5 L466,295.5 L457,296 L449,299 L444,306 Z" fill="#fff" stroke="#383838" stroke-width="0.8"/>
<path d="M476.5,292 L483,291 L487.6,295.5 L481,299 L477.5,297 Z" fill="#fff" stroke="#383838" stroke-width="0.8"/>
<path d="M491,280 L495,277 L499,282 L497,287 L493,285 Z" fill="#fff" stroke="#383838" stroke-width="0.8"/>
<path d="M519,328 L526,330 L530,337 L524,340 L520,335 Z" fill="#fff" stroke="#383838" stroke-width="0.8"/>
<path d="M214,898 L218,890 L226,887 L236,892 L231,896.5 L224,899.5 L219,902 Z" fill="#fff" stroke="#383838" stroke-width="0.8"/>
<path d="M249,884 L262,891.5 L261,893.5 L248,886 Z" fill="#fff" stroke="#383838" stroke-width="0.8"/>
<path d="M214.6,230.1 L218,230.9 L213.1,245.3 L221.6,246.3 L222.6,248.4 L212.1,249.5 L210,258.9 L208.9,251.6 Z" fill="#fcb849" stroke="#383838" stroke-width="1" stroke-linejoin="round"/>
<path d="M216,262 L221,259.5 L225.5,261 L225,265.5 L219,267 L215.5,265 Z" fill="#fcb849" stroke="#383838" stroke-width="1" stroke-linejoin="round"/>
<path d="M208,266 L211,268 L213.5,274 L211,276 L208.5,271 Z" fill="#fcb849" stroke="#383838" stroke-width="1" stroke-linejoin="round"/>
<path d="M226,279 L231,278.5 L233.5,282 L230,285.5 L226,284 Z" fill="#fcb849" stroke="#383838" stroke-width="1" stroke-linejoin="round"/>
<path d="M219,286 L222,289 L221.5,293 L219,290 Z" fill="#fcb849" stroke="#383838" stroke-width="1" stroke-linejoin="round"/>
<path d="M232,273 L238,271.5 L237,274 L232,275.5 Z" fill="#fcb849" stroke="#383838" stroke-width="1" stroke-linejoin="round"/>
<path d="M362.5,282.1 L372,281 L379.4,292.6 L367.8,293.7 L363.6,289.4 Z" fill="#fcb849" stroke="#383838" stroke-width="1" stroke-linejoin="round"/>
<path d="M115.5,370.5 L119.2,368.6 L123.8,370.5 L121,373.8 Z M126.6,365.3 L141.3,362 L141.7,363.6 L127.5,367.2 Z M144.1,360.5 L159.7,357.6 L160.1,359.2 L144.6,362 Z M162.5,356.7 L171.7,354.8 L172.1,356.3 L163,358 Z M174.4,354.8 L183.7,353.5 L184,355 L174.7,356.4 Z M184.6,352.4 L193.8,354.8 L193.5,356.4 L184.8,354.2 Z" fill="#fdc251" stroke="#383838" stroke-width="0.8"/>
<path d="M221,269 L228,266.5 L229,268 L222,270.5 Z M226,276 L232,274.5 L232.5,276 L227,277.5 Z" fill="#fcb849" stroke="#383838" stroke-width="0.7"/>
<circle cx="185" cy="315" r="0.9" fill="#555"/>
<circle cx="227" cy="336" r="0.9" fill="#555"/>
<circle cx="230" cy="345" r="0.9" fill="#555"/>
<circle cx="216" cy="348" r="0.9" fill="#555"/>
<circle cx="211" cy="353" r="0.9" fill="#555"/>
<circle cx="204" cy="357" r="0.9" fill="#555"/>
<circle cx="198" cy="360" r="0.9" fill="#555"/>
</svg>
<svg class="abs" style="left:0;top:0" width="1920" height="950">
<defs><linearGradient id="ag" x1="0" y1="297" x2="0" y2="497" gradientUnits="userSpaceOnUse">
<stop offset="0" stop-color="#8e5a42" stop-opacity="0.85"/>
<stop offset="0.15" stop-color="#d4865c" stop-opacity="0.88"/>
<stop offset="0.3" stop-color="#eb9e62" stop-opacity="0.9"/>
<stop offset="0.47" stop-color="#f7c17a" stop-opacity="0.92"/>
<stop offset="0.6" stop-color="#fcdb96" stop-opacity="0.94"/>
<stop offset="0.72" stop-color="#feefc2" stop-opacity="0.96"/>
<stop offset="0.85" stop-color="#fff6d6"/>
<stop offset="1" stop-color="#fff8dc"/></linearGradient>
<linearGradient id="lg" x1="0" y1="297" x2="0" y2="440" gradientUnits="userSpaceOnUse">
<stop offset="0" stop-color="#662506"/><stop offset="0.45" stop-color="#ec7014"/><stop offset="1" stop-color="#fec44f"/></linearGradient>
<linearGradient id="mg" x1="0" y1="555" x2="0" y2="595" gradientUnits="userSpaceOnUse">
<stop offset="0" stop-color="#9a5a38" stop-opacity="0.85"/>
<stop offset="0.3" stop-color="#e8935e" stop-opacity="0.9"/>
<stop offset="0.55" stop-color="#f8b46a"/>
<stop offset="0.8" stop-color="#fde0a0"/>
<stop offset="1" stop-color="#fff6d8"/></linearGradient>
</defs>
<line x1="849.5" y1="230" x2="849.5" y2="497" stroke="#d9d9d9" stroke-width="1"/>
<line x1="907.5" y1="230" x2="907.5" y2="497" stroke="#d9d9d9" stroke-width="1"/>
<line x1="964.5" y1="230" x2="964.5" y2="497" stroke="#d9d9d9" stroke-width="1"/>
<line x1="1022.5" y1="230" x2="1022.5" y2="497" stroke="#d9d9d9" stroke-width="1"/>
<line x1="1080.5" y1="230" x2="1080.5" y2="497" stroke="#d9d9d9" stroke-width="1"/>
<line x1="1138.5" y1="230" x2="1138.5" y2="497" stroke="#d9d9d9" stroke-width="1"/>
<line x1="1196.5" y1="230" x2="1196.5" y2="497" stroke="#d9d9d9" stroke-width="1"/>
<line x1="1253.5" y1="230" x2="1253.5" y2="497" stroke="#d9d9d9" stroke-width="1"/>
<line x1="1311.5" y1="230" x2="1311.5" y2="497" stroke="#d9d9d9" stroke-width="1"/>
<line x1="1369.5" y1="230" x2="1369.5" y2="497" stroke="#d9d9d9" stroke-width="1"/>
<line x1="1427.5" y1="230" x2="1427.5" y2="497" stroke="#d9d9d9" stroke-width="1"/>
<line x1="1485.5" y1="230" x2="1485.5" y2="497" stroke="#d9d9d9" stroke-width="1"/>
<line x1="1542.5" y1="230" x2="1542.5" y2="497" stroke="#d9d9d9" stroke-width="1"/>
<line x1="1600.5" y1="230" x2="1600.5" y2="497" stroke="#d9d9d9" stroke-width="1"/>
<line x1="1658.5" y1="230" x2="1658.5" y2="497" stroke="#d9d9d9" stroke-width="1"/>
<line x1="1716.5" y1="230" x2="1716.5" y2="497" stroke="#d9d9d9" stroke-width="1"/>
<line x1="1774.5" y1="230" x2="1774.5" y2="497" stroke="#d9d9d9" stroke-width="1"/>
<line x1="1831.5" y1="230" x2="1831.5" y2="497" stroke="#d9d9d9" stroke-width="1"/>
<line x1="1899.5" y1="230" x2="1899.5" y2="497" stroke="#d9d9d9" stroke-width="1"/>
<path d="M740.2,497 L740.8,435.0 L773.4,363.2 L808.6,383.0 L843.7,312.4 L878.9,352.1 L914.1,371.3 L949.2,335.5 L984.4,393.0 L1019.6,365.4 L1054.8,336.4 L1089.9,365.4 L1125.1,347.3 L1160.3,375.3 L1195.4,350.3 L1230.6,368.3 L1265.8,402.2 L1301.0,360.3 L1336.1,374.3 L1371.3,389.4 L1406.5,376.5 L1441.6,372.0 L1476.8,346.6 L1512.0,381.3 L1547.1,323.4 L1582.3,389.4 L1617.5,390.5 L1652.7,365.4 L1687.8,298.7 L1723.0,367.3 L1758.2,348.5 L1793.3,384.2 L1828.5,377.2 L1863.7,375.4 L1899.4,388.3 L1899.4,497 Z" fill="url(#ag)"/>
<path d="M740.8,435.0 L773.4,363.2 L808.6,383.0 L843.7,312.4 L878.9,352.1 L914.1,371.3 L949.2,335.5 L984.4,393.0 L1019.6,365.4 L1054.8,336.4 L1089.9,365.4 L1125.1,347.3 L1160.3,375.3 L1195.4,350.3 L1230.6,368.3 L1265.8,402.2 L1301.0,360.3 L1336.1,374.3 L1371.3,389.4 L1406.5,376.5 L1441.6,372.0 L1476.8,346.6 L1512.0,381.3 L1547.1,323.4 L1582.3,389.4 L1617.5,390.5 L1652.7,365.4 L1687.8,298.7 L1723.0,367.3 L1758.2,348.5 L1793.3,384.2 L1828.5,377.2 L1863.7,375.4 L1899.4,388.3" fill="none" stroke="url(#lg)" stroke-width="1.2"/>
<circle cx="773.4" cy="363.2" r="3" fill="rgb(246, 147, 44)"/>
<circle cx="808.6" cy="383.0" r="3" fill="rgb(251, 182, 78)"/>
<circle cx="843.7" cy="312.4" r="3" fill="rgb(144, 53, 7)"/>
<circle cx="878.9" cy="352.1" r="3" fill="rgb(241, 125, 28)"/>
<circle cx="914.1" cy="371.3" r="3" fill="rgb(249, 164, 55)"/>
<circle cx="949.2" cy="335.5" r="3" fill="rgb(211, 91, 16)"/>
<circle cx="984.4" cy="393.0" r="3" fill="rgb(252, 196, 98)"/>
<circle cx="1019.6" cy="365.4" r="3" fill="rgb(247, 152, 47)"/>
<circle cx="1054.8" cy="336.4" r="3" fill="rgb(213, 93, 16)"/>
<circle cx="1089.9" cy="365.4" r="3" fill="rgb(247, 152, 47)"/>
<circle cx="1125.1" cy="347.3" r="3" fill="rgb(235, 115, 23)"/>
<circle cx="1160.3" cy="375.3" r="3" fill="rgb(251, 171, 62)"/>
<circle cx="1195.4" cy="350.3" r="3" fill="rgb(240, 121, 25)"/>
<circle cx="1230.6" cy="368.3" r="3" fill="rgb(248, 158, 51)"/>
<circle cx="1265.8" cy="402.2" r="3" fill="rgb(253, 208, 118)"/>
<circle cx="1301.0" cy="360.3" r="3" fill="rgb(244, 141, 40)"/>
<circle cx="1336.1" cy="374.3" r="3" fill="rgb(251, 170, 60)"/>
<circle cx="1371.3" cy="389.4" r="3" fill="rgb(252, 191, 91)"/>
<circle cx="1406.5" cy="376.5" r="3" fill="rgb(251, 173, 64)"/>
<circle cx="1441.6" cy="372.0" r="3" fill="rgb(250, 165, 56)"/>
<circle cx="1476.8" cy="346.6" r="3" fill="rgb(233, 113, 23)"/>
<circle cx="1512.0" cy="381.3" r="3" fill="rgb(251, 179, 74)"/>
<circle cx="1547.1" cy="323.4" r="3" fill="rgb(184, 67, 9)"/>
<circle cx="1582.3" cy="389.4" r="3" fill="rgb(252, 191, 91)"/>
<circle cx="1617.5" cy="390.5" r="3" fill="rgb(252, 192, 93)"/>
<circle cx="1652.7" cy="365.4" r="3" fill="rgb(247, 152, 47)"/>
<circle cx="1687.8" cy="298.7" r="3" fill="rgb(102, 37, 6)"/>
<circle cx="1723.0" cy="367.3" r="3" fill="rgb(247, 155, 50)"/>
<circle cx="1758.2" cy="348.5" r="3" fill="rgb(237, 117, 24)"/>
<circle cx="1793.3" cy="384.2" r="3" fill="rgb(251, 183, 80)"/>
<circle cx="1828.5" cy="377.2" r="3" fill="rgb(251, 174, 66)"/>
<circle cx="1863.7" cy="375.4" r="3" fill="rgb(251, 171, 62)"/>
<line x1="740.5" y1="230" x2="740.5" y2="497" stroke="#bdbdbd"/>
<line x1="733" y1="497.5" x2="1900" y2="497.5" stroke="#bdbdbd"/>
<line x1="733" y1="251.5" x2="740" y2="251.5" stroke="#bdbdbd"/>
<line x1="733" y1="333.5" x2="740" y2="333.5" stroke="#bdbdbd"/>
<line x1="733" y1="415.5" x2="740" y2="415.5" stroke="#bdbdbd"/>
<line x1="849.5" y1="497" x2="849.5" y2="505" stroke="#bdbdbd"/>
<line x1="964.5" y1="497" x2="964.5" y2="505" stroke="#bdbdbd"/>
<line x1="1080.5" y1="497" x2="1080.5" y2="505" stroke="#bdbdbd"/>
<line x1="1196.5" y1="497" x2="1196.5" y2="505" stroke="#bdbdbd"/>
<line x1="1311.5" y1="497" x2="1311.5" y2="505" stroke="#bdbdbd"/>
<line x1="1427.5" y1="497" x2="1427.5" y2="505" stroke="#bdbdbd"/>
<line x1="1542.5" y1="497" x2="1542.5" y2="505" stroke="#bdbdbd"/>
<line x1="1658.5" y1="497" x2="1658.5" y2="505" stroke="#bdbdbd"/>
<line x1="1774.5" y1="497" x2="1774.5" y2="505" stroke="#bdbdbd"/>
<line x1="1899.5" y1="497" x2="1899.5" y2="505" stroke="#bdbdbd"/>
<rect x="740.5" y="553.5" width="1159" height="41.5" fill="#fff" stroke="#8a8a8a" stroke-width="1"/>
<path d="M741.2,595 L741.2,594.8 L773.4,572.2 L808.6,577.7 L843.7,557.8 L878.9,569.0 L914.1,574.4 L949.2,564.3 L984.4,580.6 L1019.6,572.8 L1054.8,564.6 L1089.9,572.8 L1125.1,567.7 L1160.3,575.6 L1195.4,568.5 L1230.6,573.6 L1265.8,583.2 L1301.0,571.3 L1336.1,575.3 L1371.3,579.6 L1406.5,575.9 L1441.6,574.6 L1476.8,567.5 L1512.0,577.3 L1547.1,560.9 L1582.3,579.6 L1617.5,579.9 L1652.7,572.8 L1687.8,553.9 L1723.0,573.3 L1758.2,568.0 L1793.3,578.1 L1828.5,576.1 L1863.7,575.6 L1899.5,580.0 L1899.5,595 Z" fill="url(#mg)"/>
<path d="M741.2,594.8 L773.4,572.2 L808.6,577.7 L843.7,557.8 L878.9,569.0 L914.1,574.4 L949.2,564.3 L984.4,580.6 L1019.6,572.8 L1054.8,564.6 L1089.9,572.8 L1125.1,567.7 L1160.3,575.6 L1195.4,568.5 L1230.6,573.6 L1265.8,583.2 L1301.0,571.3 L1336.1,575.3 L1371.3,579.6 L1406.5,575.9 L1441.6,574.6 L1476.8,567.5 L1512.0,577.3 L1547.1,560.9 L1582.3,579.6 L1617.5,579.9 L1652.7,572.8 L1687.8,553.9 L1723.0,573.3 L1758.2,568.0 L1793.3,578.1 L1828.5,576.1 L1863.7,575.6 L1899.5,580.0" fill="none" stroke="#e8801e" stroke-width="1"/>
</svg>
<div class="t" style="right:1191px;top:245.0px">60.000,00 €</div>
<div class="t" style="right:1191px;top:327.2px">40.000,00 €</div>
<div class="t" style="right:1191px;top:409.0px">20.000,00 €</div>
<div class="t" style="right:1191px;top:483.1px">0,00 €</div>
<div class="t" style="left:722.0px;width:80px;text-align:center;top:510.5px">01.02....</div>
<div class="t" style="left:809.3px;width:80px;text-align:center;top:510.5px">06.05.2013</div>
<div class="t" style="left:925.0px;width:80px;text-align:center;top:510.5px">14.08.2013</div>
<div class="t" style="left:1040.3px;width:80px;text-align:center;top:510.5px">22.11.2013</div>
<div class="t" style="left:1156.4px;width:80px;text-align:center;top:510.5px">02.03.2014</div>
<div class="t" style="left:1271.2px;width:80px;text-align:center;top:510.5px">10.06.2014</div>
<div class="t" style="left:1387.7px;width:80px;text-align:center;top:510.5px">18.09.2014</div>
<div class="t" style="left:1502.6px;width:80px;text-align:center;top:510.5px">27.12.2014</div>
<div class="t" style="left:1618.4px;width:80px;text-align:center;top:510.5px">06.04.2015</div>
<div class="t" style="left:1734.4px;width:80px;text-align:center;top:510.5px">15.07.2015</div>
<div class="t" style="left:1830.0px;width:80px;text-align:center;top:510.5px">01.11.20...</div>
<div class="t" style="left:798.8px;width:90px;text-align:center;top:294.0px">44.652,00 €</div>
<div class="t" style="left:764.5px;width:90px;text-align:center;top:393.5px">27.340,00 €</div>
<div class="t" style="left:811.6px;width:90px;text-align:center;top:362.2px">35.116,00 €</div>
<div class="t" style="left:869.5px;width:90px;text-align:center;top:381.4px">30.424,00 €</div>
<div class="t" style="left:905.6px;width:90px;text-align:center;top:316.9px">39.042,00 €</div>
<div class="t" style="left:941.3px;width:90px;text-align:center;top:403.1px">24.958,00 €</div>
<div class="t" style="left:1012.1px;width:90px;text-align:center;top:319.1px">38.780,00 €</div>
<div class="t" style="left:1046.4px;width:90px;text-align:center;top:375.1px">31.798,00 €</div>
<div class="t" style="left:1118.2px;width:90px;text-align:center;top:385.0px">29.399,90 €</div>
<div class="t" style="left:1150.3px;width:90px;text-align:center;top:332.0px">35.393,00 €</div>
<div class="t" style="left:1221.0px;width:90px;text-align:center;top:411.5px">22.872,40 €</div>
<div class="t" style="left:1256.3px;width:90px;text-align:center;top:342.0px">33.051,60 €</div>
<div class="t" style="left:1327.4px;width:90px;text-align:center;top:399.1px">26.028,60 €</div>
<div class="t" style="left:1363.1px;width:90px;text-align:center;top:357.8px">29.254,20 €</div>
<div class="t" style="left:1433.5px;width:90px;text-align:center;top:328.0px">36.460,60 €</div>
<div class="t" style="left:1468.2px;width:90px;text-align:center;top:391.0px">28.001,30 €</div>
<div class="t" style="left:1504.3px;width:90px;text-align:center;top:305.1px">42.140,90 €</div>
<div class="t" style="left:1572.5px;width:90px;text-align:center;top:399.8px">25.803,80 €</div>
<div class="t" style="left:1633.6px;width:90px;text-align:center;top:375.1px">31.760,40 €</div>
<div class="t" style="left:1642.5px;width:90px;text-align:center;top:280.0px">48.154,50 €</div>
<div class="t" style="left:1713.2px;width:90px;text-align:center;top:330.2px">36.086,30 €</div>
<div class="t" style="left:1749.3px;width:90px;text-align:center;top:394.3px">27.254,00 €</div>
<div class="t" style="left:1819.4px;width:90px;text-align:center;top:356.7px">29.470,30 €</div>
<svg class="abs" style="left:0;top:0" width="1920" height="950">
<line x1="747.5" y1="630.5" x2="1270" y2="630.5" stroke="#d0d0d0"/>
<line x1="740" y1="701.5" x2="1270" y2="701.5" stroke="#d0d0d0"/>
<line x1="740" y1="772.5" x2="1270" y2="772.5" stroke="#d0d0d0"/>
<line x1="747.5" y1="630" x2="747.5" y2="844" stroke="#bdbdbd"/>
<line x1="740" y1="844.5" x2="1270" y2="844.5" stroke="#a0a0a0"/>
<rect x="752.8" y="683.0" width="24.5" height="160.6" fill="#662506"/>
<rect x="787.6" y="742.4" width="24.5" height="101.2" fill="#f9ad3f"/>
<rect x="822.4" y="744.6" width="24.5" height="99.0" fill="#f9ad3f"/>
<rect x="857.2" y="751.0" width="24.5" height="92.6" fill="#fdc962"/>
<rect x="892.0" y="751.2" width="24.5" height="92.4" fill="#fdc962"/>
<rect x="926.8" y="752.7" width="24.5" height="90.9" fill="#fdc962"/>
<rect x="961.6" y="766.2" width="24.5" height="77.4" fill="#fee8a0"/>
<rect x="996.4" y="766.4" width="24.5" height="77.2" fill="#fee8a0"/>
<rect x="1031.2" y="768.1" width="24.5" height="75.5" fill="#fee8a0"/>
<rect x="1066.0" y="770.8" width="24.5" height="72.8" fill="#feeeb0"/>
<rect x="1100.8" y="771.9" width="24.5" height="71.7" fill="#feeeb0"/>
<rect x="1135.6" y="773.2" width="24.5" height="70.4" fill="#fef1b8"/>
<rect x="1170.4" y="773.2" width="24.5" height="70.4" fill="#fef1b8"/>
<rect x="1205.2" y="773.3" width="24.5" height="70.3" fill="#fef1b8"/>
<rect x="1240.0" y="774.5" width="24.5" height="69.1" fill="#fef1b8"/>
<line x1="1377.5" y1="630.5" x2="1900" y2="630.5" stroke="#d0d0d0"/>
<line x1="1370" y1="698.5" x2="1900" y2="698.5" stroke="#d0d0d0"/>
<line x1="1370" y1="766.5" x2="1900" y2="766.5" stroke="#d0d0d0"/>
<line x1="1370" y1="834.5" x2="1900" y2="834.5" stroke="#d0d0d0"/>
<line x1="1377.5" y1="630" x2="1377.5" y2="902" stroke="#bdbdbd"/>
<line x1="1370" y1="902.5" x2="1900" y2="902.5" stroke="#9a9a9a"/>
<rect x="1389.7" y="663.7" width="52.7" height="238.4" fill="#fef3b9"/>
<rect x="1465.6" y="652.6" width="52.7" height="249.5" fill="#662506"/>
<rect x="1541.6" y="662.3" width="52.7" height="239.8" fill="#fee396"/>
</svg>
<div class="t" style="right:1184px;top:632.0px">150.000,00 €</div>
<div class="t" style="right:1184px;top:696.0px">100.000,00 €</div>
<div class="t" style="right:1184px;top:766.3px">50.000,00 €</div>
<div class="t" style="right:1184px;top:830.3px">0,00 €</div>
<div class="t" style="right:554px;top:631.8px">400.000,00 €</div>
<div class="t" style="right:554px;top:692.2px">300.000,00 €</div>
<div class="t" style="right:554px;top:760.0px">200.000,00 €</div>
<div class="t" style="right:554px;top:827.8px">100.000,00 €</div>
<div class="t" style="right:554px;top:887.8px">0,00 €</div>
<div class="t r" style="left:765.05px;top:687.984192px;transform-origin:0 0;transform:translate(-6.5px,0) rotate(-90deg) translate(-100%,0);color:#fff">112.792,00 €</div>
<div class="t r" style="left:799.8499999999999px;top:739.899168px;transform-origin:0 0;transform:translate(-6.5px,0) rotate(-90deg);color:#595959">71.068,00 €</div>
<div class="t r" style="left:834.65px;top:742.149088px;transform-origin:0 0;transform:translate(-6.5px,0) rotate(-90deg);color:#595959">69.488,00 €</div>
<div class="t r" style="left:869.4499999999999px;top:748.45456px;transform-origin:0 0;transform:translate(-6.5px,0) rotate(-90deg);color:#595959">65.060,00 €</div>
<div class="t r" style="left:904.25px;top:748.730816px;transform-origin:0 0;transform:translate(-6.5px,0) rotate(-90deg);color:#595959">64.866,00 €</div>
<div class="t r" style="left:939.05px;top:750.23456px;transform-origin:0 0;transform:translate(-6.5px,0) rotate(-90deg);color:#595959">63.810,00 €</div>
<div class="t r" style="left:973.8499999999999px;top:763.671424px;transform-origin:0 0;transform:translate(-6.5px,0) rotate(-90deg);color:#595959">54.374,00 €</div>
<div class="t r" style="left:1008.6499999999999px;top:763.867936px;transform-origin:0 0;transform:translate(-6.5px,0) rotate(-90deg);color:#595959">54.236,00 €</div>
<div class="t r" style="left:1043.4499999999998px;top:765.645088px;transform-origin:0 0;transform:translate(-6.5px,0) rotate(-90deg);color:#595959">52.988,00 €</div>
<div class="t r" style="left:1078.25px;top:768.270944px;transform-origin:0 0;transform:translate(-6.5px,0) rotate(-90deg);color:#595959">51.144,00 €</div>
<div class="t r" style="left:1113.05px;top:769.4326432px;transform-origin:0 0;transform:translate(-6.5px,0) rotate(-90deg);color:#595959">50.328,20 €</div>
<div class="t r" style="left:1147.85px;top:770.65472px;transform-origin:0 0;transform:translate(-6.5px,0) rotate(-90deg);color:#595959">49.470,00 €</div>
<div class="t r" style="left:1182.6499999999999px;top:770.6830576px;transform-origin:0 0;transform:translate(-6.5px,0) rotate(-90deg);color:#595959">49.450,10 €</div>
<div class="t r" style="left:1217.4499999999998px;top:770.848384px;transform-origin:0 0;transform:translate(-6.5px,0) rotate(-90deg);color:#595959">49.334,00 €</div>
<div class="t r" style="left:1252.25px;top:771.990432px;transform-origin:0 0;transform:translate(-6.5px,0) rotate(-90deg);color:#595959">48.532,00 €</div>
<div class="t r" style="left:1416.05px;top:667.697668px;transform-origin:0 0;transform:translate(-8px,0) rotate(-90deg) translate(-100%,0);color:#595959">351.108,00 €</div>
<div class="t r" style="left:1491.9499999999998px;top:656.5990735px;transform-origin:0 0;transform:translate(-8px,0) rotate(-90deg) translate(-100%,0);color:#fff">367.453,50 €</div>
<div class="t r" style="left:1567.9499999999998px;top:666.2834468000001px;transform-origin:0 0;transform:translate(-8px,0) rotate(-90deg) translate(-100%,0);color:#595959">353.190,80 €</div>
<div class="t" style="right:1159.0px;top:850.5px;font-size:11.4px;letter-spacing:0.1px;transform-origin:100% 0;transform:rotate(-38deg);color:#6a6a6a">Berlin</div>
<div class="t" style="right:1124.2px;top:850.5px;font-size:11.4px;letter-spacing:0.1px;transform-origin:100% 0;transform:rotate(-38deg);color:#6a6a6a">Baden-Wuerttem...</div>
<div class="t" style="right:1089.3px;top:850.5px;font-size:11.4px;letter-spacing:0.1px;transform-origin:100% 0;transform:rotate(-38deg);color:#6a6a6a">Bayern</div>
<div class="t" style="right:1054.6px;top:850.5px;font-size:11.4px;letter-spacing:0.1px;transform-origin:100% 0;transform:rotate(-38deg);color:#6a6a6a">Nordrhein-Westfa...</div>
<div class="t" style="right:1019.8px;top:850.5px;font-size:11.4px;letter-spacing:0.1px;transform-origin:100% 0;transform:rotate(-38deg);color:#6a6a6a">Rheinland-Pfalz</div>
<div class="t" style="right:985.0px;top:850.5px;font-size:11.4px;letter-spacing:0.1px;transform-origin:100% 0;transform:rotate(-38deg);color:#6a6a6a">Hessen</div>
<div class="t" style="right:950.2px;top:850.5px;font-size:11.4px;letter-spacing:0.1px;transform-origin:100% 0;transform:rotate(-38deg);color:#6a6a6a">Hamburg</div>
<div class="t" style="right:915.4px;top:850.5px;font-size:11.4px;letter-spacing:0.1px;transform-origin:100% 0;transform:rotate(-38deg);color:#6a6a6a">Sachsen</div>
<div class="t" style="right:880.6px;top:850.5px;font-size:11.4px;letter-spacing:0.1px;transform-origin:100% 0;transform:rotate(-38deg);color:#6a6a6a">Schleswig-Holstein</div>
<div class="t" style="right:845.8px;top:850.5px;font-size:11.4px;letter-spacing:0.1px;transform-origin:100% 0;transform:rotate(-38deg);color:#6a6a6a">Bremen</div>
<div class="t" style="right:811.0px;top:850.5px;font-size:11.4px;letter-spacing:0.1px;transform-origin:100% 0;transform:rotate(-38deg);color:#6a6a6a">Mecklenburg-Vor...</div>
<div class="t" style="right:776.2px;top:850.5px;font-size:11.4px;letter-spacing:0.1px;transform-origin:100% 0;transform:rotate(-38deg);color:#6a6a6a">Niedersachsen</div>
<div class="t" style="right:741.4px;top:850.5px;font-size:11.4px;letter-spacing:0.1px;transform-origin:100% 0;transform:rotate(-38deg);color:#6a6a6a">Brandenburg</div>
<div class="t" style="right:706.6px;top:850.5px;font-size:11.4px;letter-spacing:0.1px;transform-origin:100% 0;transform:rotate(-38deg);color:#6a6a6a">Thueringen</div>
<div class="t" style="right:671.8px;top:850.5px;font-size:11.4px;letter-spacing:0.1px;transform-origin:100% 0;transform:rotate(-38deg);color:#6a6a6a">Sachsen-Anhalt</div>
<div class="t" style="left:1386.0px;width:60px;text-align:center;top:909.5px">2013</div>
<div class="t" style="left:1461.9px;width:60px;text-align:center;top:909.5px">2014</div>
<div class="t" style="left:1537.9px;width:60px;text-align:center;top:909.5px">2015</div>
</body></html>
